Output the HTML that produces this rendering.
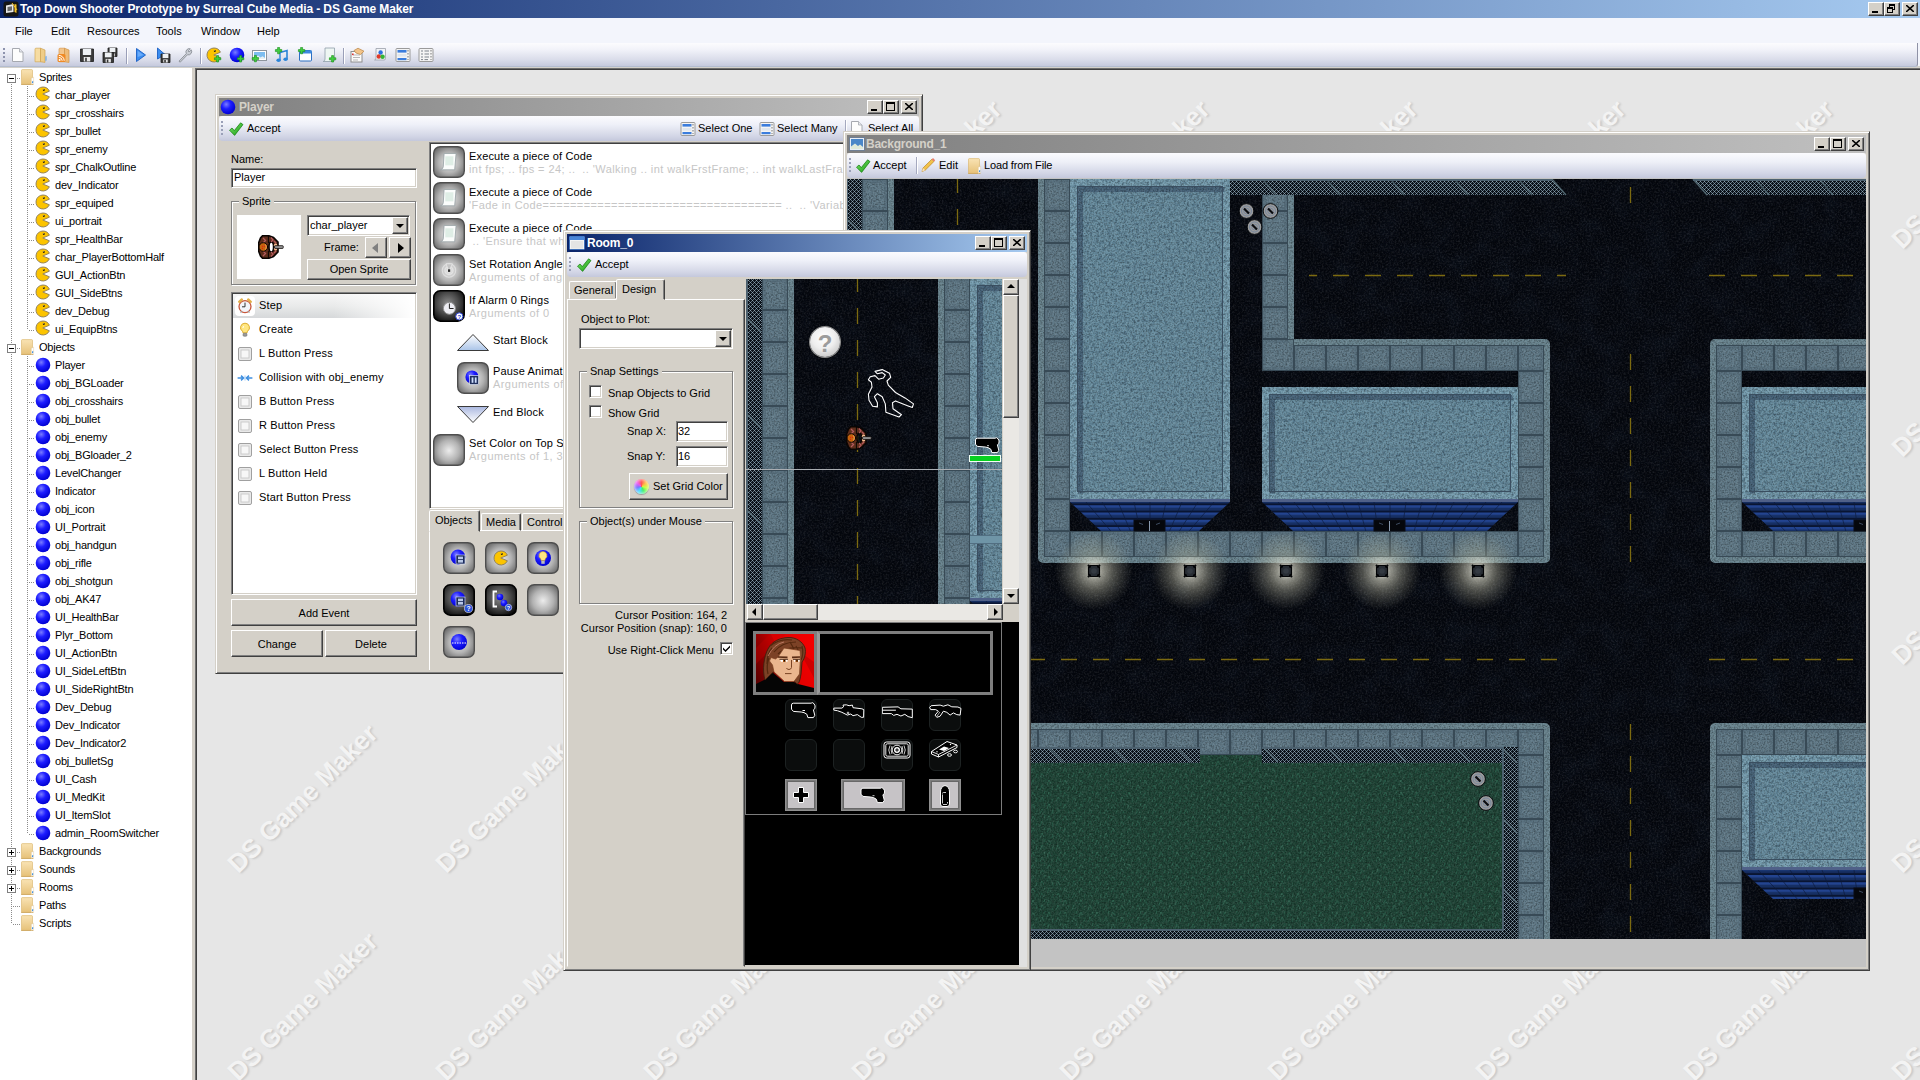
<!DOCTYPE html>
<html><head><meta charset="utf-8"><title>DS Game Maker</title>
<style>
*{box-sizing:border-box}
html,body{margin:0;padding:0}
body{width:1920px;height:1080px;overflow:hidden;position:relative;background:#e6e6e6;font:11px "Liberation Sans",sans-serif;color:#000;-webkit-font-smoothing:antialiased}
.a{position:absolute}
.t{position:absolute;white-space:nowrap;line-height:13px;height:13px}
svg{position:absolute;overflow:hidden}
.win{position:absolute;background:#d4d0c8;border:1px solid;border-color:#d4d0c8 #404040 #404040 #d4d0c8;box-shadow:inset 1px 1px #fff,inset -1px -1px #808080}
.cap{position:absolute;left:3px;right:3px;top:3px;height:18px;color:#fff;font:bold 12px "Liberation Sans",sans-serif}
.cap.on{background:linear-gradient(90deg,#0a246a,#a6caf0)}
.cap.off{background:linear-gradient(90deg,#808080,#c0c0c0);color:#d4d0c8}
.cap .t{top:2px;line-height:14px;height:14px}
.cb{position:absolute;top:2px;width:16px;height:14px;background:#d4d0c8;border:1px solid;border-color:#fff #404040 #404040 #fff;box-shadow:inset -1px -1px #808080}
.tb{position:absolute;height:25px;background:linear-gradient(#fbfbfe 0%,#eef0f8 35%,#d3d6e6 80%,#c4c8dc 100%);border-radius:3px 3px 4px 4px}
.grip{position:absolute;left:2px;top:5px;width:2px;height:15px;background:repeating-linear-gradient(#9aa0b8 0 2px,transparent 2px 4px)}
.btn{position:absolute;background:#d4d0c8;border:1px solid;border-color:#fff #404040 #404040 #fff;box-shadow:inset -1px -1px #808080;text-align:center}
.sunk{position:absolute;background:#fff;border:1px solid;border-color:#808080 #fff #fff #808080;box-shadow:inset 1px 1px #404040,inset -1px -1px #d4d0c8}
.grp{position:absolute;border:1px solid #808080;box-shadow:inset 1px 1px #fff,1px 1px #fff}
.grp>span{position:absolute;left:7px;top:-7px;background:#d4d0c8;padding:0 3px;line-height:13px}
.chk{position:absolute;width:13px;height:13px;background:#fff;border:1px solid;border-color:#808080 #fff #fff #808080;box-shadow:inset 1px 1px #404040,inset -1px -1px #d4d0c8}
.tri{position:absolute;width:0;height:0;border:4px solid transparent}
.tr{position:absolute;left:0;width:191px;height:18px}
.tr .t{top:3px}
.tt{letter-spacing:-.2px}
.sub{color:#c6c6c6;letter-spacing:.42px !important}
.wm{position:absolute;width:300px;height:32px;line-height:32px;text-align:center;white-space:nowrap;font:bold 26px "Liberation Sans",sans-serif;color:#f3f3f3;text-shadow:1px 2px 2px #c9c9c9;transform:rotate(-44.6deg)}
.act{font-size:11px;letter-spacing:.15px}
</style></head><body>

<svg width="0" height="0" style="position:absolute"><defs>
<radialGradient id="gBall" cx="38%" cy="32%" r="70%"><stop offset="0" stop-color="#7a7cff"/><stop offset=".45" stop-color="#1d1dff"/><stop offset="1" stop-color="#0000d0"/></radialGradient>
<linearGradient id="gFold" x1="0" y1="0" x2="0" y2="1"><stop offset="0" stop-color="#f9e3b4"/><stop offset="1" stop-color="#e6c178"/></linearGradient>
<linearGradient id="gChk" x1="0" y1="0" x2="1" y2="1"><stop offset="0" stop-color="#7de66a"/><stop offset="1" stop-color="#169a12"/></linearGradient>
<radialGradient id="gAct" cx="50%" cy="52%" r="62%"><stop offset="0" stop-color="#ececec"/><stop offset=".55" stop-color="#b2b2b2"/><stop offset="1" stop-color="#686868"/></radialGradient>
<radialGradient id="gActD" cx="46%" cy="42%" r="66%"><stop offset="0" stop-color="#8c8c8c"/><stop offset=".55" stop-color="#484848"/><stop offset="1" stop-color="#080808"/></radialGradient>
<linearGradient id="gTriU" x1="0" y1="0" x2="0" y2="1"><stop offset="0" stop-color="#fff"/><stop offset="1" stop-color="#aac4e8"/></linearGradient>
<linearGradient id="gTriD" x1="0" y1="0" x2="0" y2="1"><stop offset="0" stop-color="#aab8e0"/><stop offset="1" stop-color="#fff"/></linearGradient>
<symbol id="pac" viewBox="0 0 16 16"><path d="M8 1A7 7 0 1 0 14.400 10.800L7.800 8 14.400 5.200A7 7 0 0 0 8 1Z" fill="#fcc400" stroke="#8a7a5a" stroke-width=".9"/><circle cx="8.800" cy="4" r="1" fill="#2a2000"/><circle cx="8.500" cy="3.700" r=".4" fill="#fff"/></symbol>
<symbol id="ball" viewBox="0 0 16 16"><circle cx="8" cy="8" r="7.3" fill="url(#gBall)"/></symbol>
<symbol id="fold" viewBox="0 0 16 16"><path d="M1.5 1.5Q1.5 .6 2.4 .6H11.6Q12.5 .6 12.5 1.5V15.4H1.5Z" fill="url(#gFold)" stroke="#d9b166" stroke-width=".6"/><path d="M1.2 15.6H13.5" stroke="#c9a45c" stroke-width=".8"/><path d="M11.3 9.3 13.6 8.2V14.5L11.3 15.4Z" fill="#fff" stroke="#d8c090" stroke-width=".4"/><path d="M12 12.5 13.2 12V13.8L12 14.3Z" fill="#3f8fe0"/></symbol>
<symbol id="chk" viewBox="0 0 16 16"><path d="M1.5 9.2 4 7 6.3 9.6 12.6 1.8 15 3.6 6.6 14.4Z" fill="url(#gChk)" stroke="#0e7a0c" stroke-width=".7"/></symbol>
<symbol id="evt" viewBox="0 0 16 16"><rect x="1.5" y="1.5" width="13" height="13" rx="1.5" fill="#e9e9e9" stroke="#a0a0a0"/><rect x="4" y="4" width="8" height="8" fill="#f7f7f7" stroke="#c4c4c4" stroke-width=".8"/></symbol>
<symbol id="plus" viewBox="0 0 8 8"><path d="M3 .5H5V3H7.5V5H5V7.5H3V5H.5V3H3Z" fill="#2fc12f" stroke="#0b7a0b" stroke-width=".7"/></symbol>
<symbol id="abtn" viewBox="0 0 32 32"><rect x=".7" y=".7" width="30.600" height="30.600" rx="6.500" fill="url(#gAct)" stroke="#4e4e4e" stroke-width="1.400"/></symbol>
<symbol id="abtnd" viewBox="0 0 32 32"><rect x=".8" y=".8" width="30.400" height="30.400" rx="6.500" fill="url(#gActD)" stroke="#000" stroke-width="1.600"/></symbol>
<symbol id="scroll" viewBox="0 0 16 16"><path d="M4.300 1.200H14.400L13.200 15H1.300Q3.500 14.300 3.600 12.400Z" fill="#fbfdfc" stroke="#98a2a6" stroke-width=".7"/><rect x="5.300" y="3.600" width="6.800" height="7.600" fill="#d9ebe2" opacity=".85"/></symbol>
<symbol id="qm" viewBox="0 0 8 8"><circle cx="4" cy="4" r="3.6" fill="#2a50d8" stroke="#fff" stroke-width=".5"/><text x="4" y="6.2" font-size="6" font-weight="bold" fill="#fff" text-anchor="middle" font-family="Liberation Sans, sans-serif">?</text></symbol>
<symbol id="film" viewBox="0 0 10 10"><rect x=".5" y=".5" width="9" height="9" fill="#1a2a5a"/><rect x="2.5" y="1.5" width="5" height="3" fill="#bcd"/><rect x="2.5" y="5.5" width="5" height="3" fill="#bcd"/><path d="M1.5 1V9M8.5 1V9" stroke="#fff" stroke-width=".8" stroke-dasharray="1 1"/></symbol>
<symbol id="lst" viewBox="0 0 16 16"><rect x="1" y="1.5" width="14" height="13" rx="1" fill="#f4f4f4" stroke="#9a9a9a"/><rect x="2.5" y="3" width="9" height="2.6" fill="#3b7ddd"/><rect x="2.5" y="7" width="9" height="2.6" fill="#dfe6ee"/><rect x="2.5" y="11" width="9" height="2.2" fill="#3b7ddd"/><path d="M13 3V13" stroke="#777" stroke-dasharray="1.5 1.5"/></symbol>
<symbol id="plyr" viewBox="0 0 26 24"><path d="M4.500 .8H11L15.500 2.500 20 7V17L15.500 21.500 11 23.200H4.500L2.500 21 .6 16V8L2.500 3ZM13.200 7C11.800 7 11 9 11 12S11.800 17 13.200 17 15.600 15 15.600 12 14.600 7 13.200 7Z" fill="#5e2e1c" stroke="#0a0503" stroke-width="1.600" fill-rule="evenodd"/><path d="M5 3l2.500 2.500L5 8M13 2.500l2 2.500-2 2M16 6l2 2M5 16l2.500 2.500L5 21M13 17l2 2-2 2.500M16 18l2-2" fill="none" stroke="#b25a5c" stroke-width="1.300"/><path d="M10.400 1V8M10.400 16V23" stroke="#0a0503" stroke-width="1"/><circle cx="5.300" cy="12" r="4.300" fill="#c4640e" stroke="#0a0503" stroke-width="1"/><path d="M7.600 9.500Q9 12 7.600 14.500" fill="none" stroke="#f0a860" stroke-width=".9"/><rect x="3.900" y="10.800" width="1" height="1" fill="#e81010"/><rect x="5.900" y="10.800" width="1" height="1" fill="#e81010"/><rect x="3.900" y="12.900" width="1" height="1" fill="#e81010"/><circle cx="17.600" cy="10.300" r="1.700" fill="#f6bd90"/><circle cx="17.600" cy="13.800" r="1.700" fill="#f6bd90"/><rect x="16.600" y="10.700" width="8.600" height="2.700" rx=".6" fill="#9c9c9c" stroke="#0a0503" stroke-width=".8"/></symbol>
</defs></svg>

<div class="a" style="left:0;top:0;width:1920px;height:18px;background:linear-gradient(90deg,#0a246a,#a6caf0)"></div>
<svg class="a" style="left:3px;top:1px" width="16" height="16" viewBox="0 0 16 16"><rect x=".5" y=".5" width="15" height="15" rx="2.5" fill="#151515"/><path d="M3 4.5 10.5 3V11L3 12Z" fill="#e8e8e8"/><path d="M4.5 6 9 5.2V9.5L4.5 10.2Z" fill="#6a6a6a"/><path d="M11.5 3 13.5 3.5V12L11.5 11Z" fill="#f3c22a"/><path d="M9 2 14 9" stroke="#f3c22a" stroke-width="1"/></svg>
<div class="t" style="left:20px;top:2px;color:#fff;font:bold 12px 'Liberation Sans',sans-serif;line-height:14px;letter-spacing:-.1px">Top Down Shooter Prototype by Surreal Cube Media - DS Game Maker</div>
<div class="a" style="left:0;top:0;width:1920px;height:18px"><div class="cb" style="right:36px"><div class="a" style="left:3px;top:8px;width:6px;height:2px;background:#000"></div></div><div class="cb" style="right:20px"><div class="a" style="left:4px;top:1px;width:6px;height:6px;border:1px solid #000;border-top-width:2px"></div><div class="a" style="left:2px;top:4px;width:6px;height:6px;border:1px solid #000;border-top-width:2px;background:#d4d0c8"></div></div><div class="cb" style="right:2px"><svg class="a" style="left:3px;top:2px" width="8" height="7"><path d="M0 0 8 7M8 0 0 7" stroke="#000" stroke-width="1.6"/></svg></div></div>
<div class="a" style="left:0;top:18px;width:1920px;height:50px;background:#f3f5fc"></div>
<div class="t" style="left:15px;top:25px">File</div>
<div class="t" style="left:51px;top:25px">Edit</div>
<div class="t" style="left:87px;top:25px">Resources</div>
<div class="t" style="left:156px;top:25px">Tools</div>
<div class="t" style="left:201px;top:25px">Window</div>
<div class="t" style="left:257px;top:25px">Help</div>
<div class="a" style="left:0;top:66px;width:1920px;height:2px;background:#d3d1cb"></div><div class="a" style="left:0;top:43px;width:1918px;height:24px;background:linear-gradient(#fcfcfe 0%,#f1f2f9 30%,#d8dbe9 75%,#c6cadd 100%);border-radius:0 0 3px 0;border-bottom:1px solid #b3bccf;border-right:1px solid #8f92a6"></div>
<div class="a" style="left:3px;top:48px;width:2px;height:15px;background:repeating-linear-gradient(#8d93ad 0 2px,transparent 2px 4px)"></div>
<div class="a" style="left:126px;top:48px;width:1px;height:16px;background:#9a9fb8;box-shadow:1px 0 #fff"></div>
<div class="a" style="left:200px;top:48px;width:1px;height:16px;background:#9a9fb8;box-shadow:1px 0 #fff"></div>
<div class="a" style="left:343px;top:48px;width:1px;height:16px;background:#9a9fb8;box-shadow:1px 0 #fff"></div>
<svg class="a" style="left:10px;top:47px" width="16" height="16" viewBox="0 0 16 16"><path d="M2.5 1.5H9.5L13 5V14.5H2.5Z" fill="#fdfdfd" stroke="#a6a9b0"/><path d="M9.5 1.5V5H13" fill="#e6e8ee" stroke="#a6a9b0" stroke-width=".8"/></svg><svg class="a" style="left:33px;top:47px" width="16" height="16" viewBox="0 0 16 16"><path d="M2 2.2Q2 1.2 3 1.2H7.5V14.8H2Z" fill="#f6dca2" stroke="#d3a958" stroke-width=".7"/><path d="M7.5 1.2 12 3V15.4L7.5 14.8Z" fill="#efcd88" stroke="#cfa250" stroke-width=".7"/><path d="M12.4 9.5 13.6 9V13.4L12.4 14Z" fill="#6aa9e6"/></svg><svg class="a" style="left:56px;top:47px" width="16" height="16" viewBox="0 0 16 16"><path d="M3 2.2Q3 1.2 4 1.2H8.5V14.8H3Z" fill="#f3c58b" stroke="#d99a4e" stroke-width=".7"/><path d="M8.5 1.2 13 3V15.4L8.5 14.8Z" fill="#eebb78" stroke="#cf9448" stroke-width=".7"/><rect x="1.5" y="7" width="8" height="8" rx="1.6" fill="#f08a24"/><circle cx="3.6" cy="12.9" r="1" fill="#fff"/><path d="M2.8 10.4A3.4 3.4 0 0 1 6.2 13.8M2.8 8.4A5.4 5.4 0 0 1 8.2 13.8" fill="none" stroke="#fff" stroke-width="1"/></svg><svg class="a" style="left:79px;top:47px" width="16" height="16" viewBox="0 0 16 16"><path d="M1.5 2h13v12.5h-13z" fill="#3a3a3a" stroke="#1c1c1c" stroke-width=".8"/><rect x="3.84" y="2" width="8.32" height="6.0" fill="#eef1f4"/><rect x="4.75" y="10.0" width="6.5" height="4.5" fill="#e8e8e8"/><rect x="6.18" y="10.75" width="1.6" height="3.75" fill="#333"/></svg><svg class="a" style="left:102px;top:47px" width="16" height="16" viewBox="0 0 16 16"><path d="M6 1h9v8.5h-9z" fill="#3a3a3a" stroke="#1c1c1c" stroke-width=".8"/><rect x="7.62" y="1" width="5.76" height="4.08" fill="#eef1f4"/><rect x="8.25" y="6.44" width="4.5" height="3.06" fill="#e8e8e8"/><rect x="9.24" y="6.949999999999999" width="1.6" height="2.55" fill="#333"/><path d="M1 5.5h10.5v10h-10.5z" fill="#3a3a3a" stroke="#1c1c1c" stroke-width=".8"/><rect x="2.8899999999999997" y="5.5" width="6.72" height="4.8" fill="#eef1f4"/><rect x="3.625" y="11.9" width="5.25" height="3.5999999999999996" fill="#e8e8e8"/><rect x="4.779999999999999" y="12.5" width="1.6" height="3.0" fill="#333"/></svg><svg class="a" style="left:133px;top:47px" width="16" height="16" viewBox="0 0 16 16"><path d="M3.5 1.5 12.5 8 3.5 14.5Z" fill="#3a8df0" stroke="#1a5fc4" stroke-width=".9"/><path d="M4.6 3.8 10.6 8 4.6 10Z" fill="#7db8ff" opacity=".7"/></svg><svg class="a" style="left:155px;top:47px" width="16" height="16" viewBox="0 0 16 16"><path d="M2.5 1 10 7.5 2.5 12Z" fill="#3a8df0" stroke="#1a5fc4" stroke-width=".9"/><path d="M6 7h9v8.5h-9z" fill="#3a3a3a" stroke="#1c1c1c" stroke-width=".8"/><rect x="7.62" y="7" width="5.76" height="4.08" fill="#eef1f4"/><rect x="8.25" y="12.440000000000001" width="4.5" height="3.06" fill="#e8e8e8"/><rect x="9.24" y="12.95" width="1.6" height="2.55" fill="#333"/></svg><svg class="a" style="left:177px;top:47px" width="16" height="16" viewBox="0 0 16 16"><path d="M2 14.2 9.3 6.6A3.4 3.4 0 0 1 13.4 1.8L11.2 4 12 5 14.3 2.9A3.4 3.4 0 0 1 10.4 7.8L3.2 15.2Z" fill="#c9cdd4" stroke="#82868e" stroke-width=".8"/></svg><svg class="a" style="left:206px;top:47px" width="16" height="16" viewBox="0 0 16 16"><use href="#pac"/><path d="M10.6 8.6h2v2.200h2.200v2h-2.200v2.200h-2v-2.200h-2.200v-2h2.200z" fill="#3fd03f" stroke="#168a16" stroke-width=".6"/></svg><svg class="a" style="left:229px;top:47px" width="16" height="16" viewBox="0 0 16 16"><use href="#ball"/><path d="M10.6 8.6h2v2.200h2.200v2h-2.200v2.200h-2v-2.200h-2.200v-2h2.200z" fill="#3fd03f" stroke="#168a16" stroke-width=".6"/></svg><svg class="a" style="left:251px;top:47px" width="16" height="16" viewBox="0 0 16 16"><rect x="1.500" y="3.500" width="14" height="10" fill="#fff" stroke="#8e959e"/><rect x="3" y="5" width="11" height="7" fill="#7dbdf0"/><path d="M3 12 7 8.500 9.500 10.500 11.500 9.200 14 11V12Z" fill="#e8f0f4"/><path d="M3.4 8.4h2v2.200h2.200v2h-2.200v2.200h-2v-2.200h-2.200v-2h2.200z" fill="#3fd03f" stroke="#168a16" stroke-width=".6"/></svg><svg class="a" style="left:274px;top:47px" width="16" height="16" viewBox="0 0 16 16"><path d="M6 5.5 13 3.5V12" fill="none" stroke="#2a84d8" stroke-width="1.6"/><path d="M6 5.5V13" stroke="#2a84d8" stroke-width="1.4"/><ellipse cx="4.6" cy="13.2" rx="2.2" ry="1.7" fill="#2a84d8"/><ellipse cx="11.6" cy="12.2" rx="2.2" ry="1.7" fill="#2a84d8"/><path d="M3.6 0.4h2v2.200h2.200v2h-2.200v2.200h-2v-2.200h-2.200v-2h2.200z" fill="#3fd03f" stroke="#168a16" stroke-width=".6"/></svg><svg class="a" style="left:297px;top:47px" width="16" height="16" viewBox="0 0 16 16"><rect x="2.5" y="3.5" width="12" height="10.5" rx="1" fill="#fff" stroke="#2b6fc2"/><rect x="2.5" y="3.5" width="12" height="3" fill="#3f8ae0"/><path d="M3.6 0.4h2v2.200h2.200v2h-2.200v2.200h-2v-2.200h-2.200v-2h2.200z" fill="#3fd03f" stroke="#168a16" stroke-width=".6"/></svg><svg class="a" style="left:321px;top:47px" width="16" height="16" viewBox="0 0 16 16"><path d="M4 1H13.500V12.500Q13.500 14.500 11.500 14.500H2.200Q4.200 14 4 12Z" fill="#eef6f3" stroke="#8fa0aa" stroke-width=".8"/><path d="M10.6 8.6h2v2.200h2.200v2h-2.200v2.200h-2v-2.200h-2.200v-2h2.200z" fill="#3fd03f" stroke="#168a16" stroke-width=".6"/></svg><svg class="a" style="left:349px;top:47px" width="16" height="16" viewBox="0 0 16 16"><rect x="2" y="4.5" width="11" height="10.5" fill="#fbfbfb" stroke="#8e8e8e"/><path d="M4 8H11M4 10.5H11M4 13H9" stroke="#b8b8b8"/><path d="M5 3.5 9 1.2 15 4.2 11.5 7.5 7 6Z" fill="#f2c48a" stroke="#b98342" stroke-width=".7"/><rect x="3" y="6.5" width="1.6" height="1.6" fill="#d33"/></svg><svg class="a" style="left:372px;top:47px" width="16" height="16" viewBox="0 0 16 16"><path d="M4 1.5H13.5V11.5Q13.5 13 12 13H2.6Q4.2 12.4 4 11Z" fill="#f1f3f6" stroke="#9aa0aa" stroke-width=".8"/><circle cx="8.6" cy="5.5" r="2.2" fill="#2a6fe0"/><circle cx="6.8" cy="9.5" r="2.2" fill="#e03a2a"/><circle cx="10.6" cy="9.8" r="2.2" fill="#35b335"/></svg><svg class="a" style="left:395px;top:47px" width="16" height="16" viewBox="0 0 16 16"><use href="#lst"/></svg><svg class="a" style="left:418px;top:47px" width="16" height="16" viewBox="0 0 16 16"><rect x="1" y="1.5" width="14" height="13" rx="1" fill="#f4f4f4" stroke="#9a9a9a"/><path d="M3 4H5M6.5 4H11M3 7H5M6.5 7H11M3 10H5M6.5 10H11M3 12.6H5M6.5 12.6H10" stroke="#7d838c"/><path d="M13 3V13" stroke="#777" stroke-dasharray="1.5 1.5"/></svg>
<div class="a" style="left:0;top:68px;width:192px;height:1012px;background:#fff"></div>
<div class="a" style="left:11px;top:82px;width:1px;height:842px;background:repeating-linear-gradient(#8c8c8c 0 1px,transparent 1px 2px)"></div>
<div class="a" style="left:27px;top:86px;width:1px;height:244px;background:repeating-linear-gradient(#8c8c8c 0 1px,transparent 1px 2px)"></div>
<div class="a" style="left:27px;top:356px;width:1px;height:478px;background:repeating-linear-gradient(#8c8c8c 0 1px,transparent 1px 2px)"></div>
<div class="a" style="left:13px;top:78px;width:7px;height:1px;background:repeating-linear-gradient(90deg,#8c8c8c 0 1px,transparent 1px 2px)"></div>
<div class="a" style="left:7px;top:74px;width:9px;height:9px;border:1px solid #808080;background:#fff"><div class="a" style="left:1px;top:3px;width:5px;height:1px;background:#000"></div></div>
<svg class="a" style="left:20px;top:69px" width="16" height="16" ><use href="#fold"/></svg>
<div class="t tt" style="left:39px;top:71px">Sprites</div>
<div class="a" style="left:29px;top:96px;width:6px;height:1px;background:repeating-linear-gradient(90deg,#8c8c8c 0 1px,transparent 1px 2px)"></div>
<svg class="a" style="left:35px;top:86.4px" width="16" height="16" ><use href="#pac"/></svg>
<div class="t tt" style="left:55px;top:89px">char_player</div>
<div class="a" style="left:29px;top:114px;width:6px;height:1px;background:repeating-linear-gradient(90deg,#8c8c8c 0 1px,transparent 1px 2px)"></div>
<svg class="a" style="left:35px;top:104.4px" width="16" height="16" ><use href="#pac"/></svg>
<div class="t tt" style="left:55px;top:107px">spr_crosshairs</div>
<div class="a" style="left:29px;top:132px;width:6px;height:1px;background:repeating-linear-gradient(90deg,#8c8c8c 0 1px,transparent 1px 2px)"></div>
<svg class="a" style="left:35px;top:122.4px" width="16" height="16" ><use href="#pac"/></svg>
<div class="t tt" style="left:55px;top:125px">spr_bullet</div>
<div class="a" style="left:29px;top:150px;width:6px;height:1px;background:repeating-linear-gradient(90deg,#8c8c8c 0 1px,transparent 1px 2px)"></div>
<svg class="a" style="left:35px;top:140.4px" width="16" height="16" ><use href="#pac"/></svg>
<div class="t tt" style="left:55px;top:143px">spr_enemy</div>
<div class="a" style="left:29px;top:168px;width:6px;height:1px;background:repeating-linear-gradient(90deg,#8c8c8c 0 1px,transparent 1px 2px)"></div>
<svg class="a" style="left:35px;top:158.4px" width="16" height="16" ><use href="#pac"/></svg>
<div class="t tt" style="left:55px;top:161px">spr_ChalkOutline</div>
<div class="a" style="left:29px;top:186px;width:6px;height:1px;background:repeating-linear-gradient(90deg,#8c8c8c 0 1px,transparent 1px 2px)"></div>
<svg class="a" style="left:35px;top:176.4px" width="16" height="16" ><use href="#pac"/></svg>
<div class="t tt" style="left:55px;top:179px">dev_Indicator</div>
<div class="a" style="left:29px;top:204px;width:6px;height:1px;background:repeating-linear-gradient(90deg,#8c8c8c 0 1px,transparent 1px 2px)"></div>
<svg class="a" style="left:35px;top:194.4px" width="16" height="16" ><use href="#pac"/></svg>
<div class="t tt" style="left:55px;top:197px">spr_equiped</div>
<div class="a" style="left:29px;top:222px;width:6px;height:1px;background:repeating-linear-gradient(90deg,#8c8c8c 0 1px,transparent 1px 2px)"></div>
<svg class="a" style="left:35px;top:212.4px" width="16" height="16" ><use href="#pac"/></svg>
<div class="t tt" style="left:55px;top:215px">ui_portrait</div>
<div class="a" style="left:29px;top:240px;width:6px;height:1px;background:repeating-linear-gradient(90deg,#8c8c8c 0 1px,transparent 1px 2px)"></div>
<svg class="a" style="left:35px;top:230.4px" width="16" height="16" ><use href="#pac"/></svg>
<div class="t tt" style="left:55px;top:233px">spr_HealthBar</div>
<div class="a" style="left:29px;top:258px;width:6px;height:1px;background:repeating-linear-gradient(90deg,#8c8c8c 0 1px,transparent 1px 2px)"></div>
<svg class="a" style="left:35px;top:248.4px" width="16" height="16" ><use href="#pac"/></svg>
<div class="t tt" style="left:55px;top:251px">char_PlayerBottomHalf</div>
<div class="a" style="left:29px;top:276px;width:6px;height:1px;background:repeating-linear-gradient(90deg,#8c8c8c 0 1px,transparent 1px 2px)"></div>
<svg class="a" style="left:35px;top:266.4px" width="16" height="16" ><use href="#pac"/></svg>
<div class="t tt" style="left:55px;top:269px">GUI_ActionBtn</div>
<div class="a" style="left:29px;top:294px;width:6px;height:1px;background:repeating-linear-gradient(90deg,#8c8c8c 0 1px,transparent 1px 2px)"></div>
<svg class="a" style="left:35px;top:284.4px" width="16" height="16" ><use href="#pac"/></svg>
<div class="t tt" style="left:55px;top:287px">GUI_SideBtns</div>
<div class="a" style="left:29px;top:312px;width:6px;height:1px;background:repeating-linear-gradient(90deg,#8c8c8c 0 1px,transparent 1px 2px)"></div>
<svg class="a" style="left:35px;top:302.4px" width="16" height="16" ><use href="#pac"/></svg>
<div class="t tt" style="left:55px;top:305px">dev_Debug</div>
<div class="a" style="left:29px;top:330px;width:6px;height:1px;background:repeating-linear-gradient(90deg,#8c8c8c 0 1px,transparent 1px 2px)"></div>
<svg class="a" style="left:35px;top:320.4px" width="16" height="16" ><use href="#pac"/></svg>
<div class="t tt" style="left:55px;top:323px">ui_EquipBtns</div>
<div class="a" style="left:13px;top:348px;width:7px;height:1px;background:repeating-linear-gradient(90deg,#8c8c8c 0 1px,transparent 1px 2px)"></div>
<div class="a" style="left:7px;top:344px;width:9px;height:9px;border:1px solid #808080;background:#fff"><div class="a" style="left:1px;top:3px;width:5px;height:1px;background:#000"></div></div>
<svg class="a" style="left:20px;top:339px" width="16" height="16" ><use href="#fold"/></svg>
<div class="t tt" style="left:39px;top:341px">Objects</div>
<div class="a" style="left:29px;top:366px;width:6px;height:1px;background:repeating-linear-gradient(90deg,#8c8c8c 0 1px,transparent 1px 2px)"></div>
<svg class="a" style="left:35px;top:357px" width="16" height="16" ><use href="#ball"/></svg>
<div class="t tt" style="left:55px;top:359px">Player</div>
<div class="a" style="left:29px;top:384px;width:6px;height:1px;background:repeating-linear-gradient(90deg,#8c8c8c 0 1px,transparent 1px 2px)"></div>
<svg class="a" style="left:35px;top:375px" width="16" height="16" ><use href="#ball"/></svg>
<div class="t tt" style="left:55px;top:377px">obj_BGLoader</div>
<div class="a" style="left:29px;top:402px;width:6px;height:1px;background:repeating-linear-gradient(90deg,#8c8c8c 0 1px,transparent 1px 2px)"></div>
<svg class="a" style="left:35px;top:393px" width="16" height="16" ><use href="#ball"/></svg>
<div class="t tt" style="left:55px;top:395px">obj_crosshairs</div>
<div class="a" style="left:29px;top:420px;width:6px;height:1px;background:repeating-linear-gradient(90deg,#8c8c8c 0 1px,transparent 1px 2px)"></div>
<svg class="a" style="left:35px;top:411px" width="16" height="16" ><use href="#ball"/></svg>
<div class="t tt" style="left:55px;top:413px">obj_bullet</div>
<div class="a" style="left:29px;top:438px;width:6px;height:1px;background:repeating-linear-gradient(90deg,#8c8c8c 0 1px,transparent 1px 2px)"></div>
<svg class="a" style="left:35px;top:429px" width="16" height="16" ><use href="#ball"/></svg>
<div class="t tt" style="left:55px;top:431px">obj_enemy</div>
<div class="a" style="left:29px;top:456px;width:6px;height:1px;background:repeating-linear-gradient(90deg,#8c8c8c 0 1px,transparent 1px 2px)"></div>
<svg class="a" style="left:35px;top:447px" width="16" height="16" ><use href="#ball"/></svg>
<div class="t tt" style="left:55px;top:449px">obj_BGloader_2</div>
<div class="a" style="left:29px;top:474px;width:6px;height:1px;background:repeating-linear-gradient(90deg,#8c8c8c 0 1px,transparent 1px 2px)"></div>
<svg class="a" style="left:35px;top:465px" width="16" height="16" ><use href="#ball"/></svg>
<div class="t tt" style="left:55px;top:467px">LevelChanger</div>
<div class="a" style="left:29px;top:492px;width:6px;height:1px;background:repeating-linear-gradient(90deg,#8c8c8c 0 1px,transparent 1px 2px)"></div>
<svg class="a" style="left:35px;top:483px" width="16" height="16" ><use href="#ball"/></svg>
<div class="t tt" style="left:55px;top:485px">Indicator</div>
<div class="a" style="left:29px;top:510px;width:6px;height:1px;background:repeating-linear-gradient(90deg,#8c8c8c 0 1px,transparent 1px 2px)"></div>
<svg class="a" style="left:35px;top:501px" width="16" height="16" ><use href="#ball"/></svg>
<div class="t tt" style="left:55px;top:503px">obj_icon</div>
<div class="a" style="left:29px;top:528px;width:6px;height:1px;background:repeating-linear-gradient(90deg,#8c8c8c 0 1px,transparent 1px 2px)"></div>
<svg class="a" style="left:35px;top:519px" width="16" height="16" ><use href="#ball"/></svg>
<div class="t tt" style="left:55px;top:521px">UI_Portrait</div>
<div class="a" style="left:29px;top:546px;width:6px;height:1px;background:repeating-linear-gradient(90deg,#8c8c8c 0 1px,transparent 1px 2px)"></div>
<svg class="a" style="left:35px;top:537px" width="16" height="16" ><use href="#ball"/></svg>
<div class="t tt" style="left:55px;top:539px">obj_handgun</div>
<div class="a" style="left:29px;top:564px;width:6px;height:1px;background:repeating-linear-gradient(90deg,#8c8c8c 0 1px,transparent 1px 2px)"></div>
<svg class="a" style="left:35px;top:555px" width="16" height="16" ><use href="#ball"/></svg>
<div class="t tt" style="left:55px;top:557px">obj_rifle</div>
<div class="a" style="left:29px;top:582px;width:6px;height:1px;background:repeating-linear-gradient(90deg,#8c8c8c 0 1px,transparent 1px 2px)"></div>
<svg class="a" style="left:35px;top:573px" width="16" height="16" ><use href="#ball"/></svg>
<div class="t tt" style="left:55px;top:575px">obj_shotgun</div>
<div class="a" style="left:29px;top:600px;width:6px;height:1px;background:repeating-linear-gradient(90deg,#8c8c8c 0 1px,transparent 1px 2px)"></div>
<svg class="a" style="left:35px;top:591px" width="16" height="16" ><use href="#ball"/></svg>
<div class="t tt" style="left:55px;top:593px">obj_AK47</div>
<div class="a" style="left:29px;top:618px;width:6px;height:1px;background:repeating-linear-gradient(90deg,#8c8c8c 0 1px,transparent 1px 2px)"></div>
<svg class="a" style="left:35px;top:609px" width="16" height="16" ><use href="#ball"/></svg>
<div class="t tt" style="left:55px;top:611px">UI_HealthBar</div>
<div class="a" style="left:29px;top:636px;width:6px;height:1px;background:repeating-linear-gradient(90deg,#8c8c8c 0 1px,transparent 1px 2px)"></div>
<svg class="a" style="left:35px;top:627px" width="16" height="16" ><use href="#ball"/></svg>
<div class="t tt" style="left:55px;top:629px">Plyr_Bottom</div>
<div class="a" style="left:29px;top:654px;width:6px;height:1px;background:repeating-linear-gradient(90deg,#8c8c8c 0 1px,transparent 1px 2px)"></div>
<svg class="a" style="left:35px;top:645px" width="16" height="16" ><use href="#ball"/></svg>
<div class="t tt" style="left:55px;top:647px">UI_ActionBtn</div>
<div class="a" style="left:29px;top:672px;width:6px;height:1px;background:repeating-linear-gradient(90deg,#8c8c8c 0 1px,transparent 1px 2px)"></div>
<svg class="a" style="left:35px;top:663px" width="16" height="16" ><use href="#ball"/></svg>
<div class="t tt" style="left:55px;top:665px">UI_SideLeftBtn</div>
<div class="a" style="left:29px;top:690px;width:6px;height:1px;background:repeating-linear-gradient(90deg,#8c8c8c 0 1px,transparent 1px 2px)"></div>
<svg class="a" style="left:35px;top:681px" width="16" height="16" ><use href="#ball"/></svg>
<div class="t tt" style="left:55px;top:683px">UI_SideRightBtn</div>
<div class="a" style="left:29px;top:708px;width:6px;height:1px;background:repeating-linear-gradient(90deg,#8c8c8c 0 1px,transparent 1px 2px)"></div>
<svg class="a" style="left:35px;top:699px" width="16" height="16" ><use href="#ball"/></svg>
<div class="t tt" style="left:55px;top:701px">Dev_Debug</div>
<div class="a" style="left:29px;top:726px;width:6px;height:1px;background:repeating-linear-gradient(90deg,#8c8c8c 0 1px,transparent 1px 2px)"></div>
<svg class="a" style="left:35px;top:717px" width="16" height="16" ><use href="#ball"/></svg>
<div class="t tt" style="left:55px;top:719px">Dev_Indicator</div>
<div class="a" style="left:29px;top:744px;width:6px;height:1px;background:repeating-linear-gradient(90deg,#8c8c8c 0 1px,transparent 1px 2px)"></div>
<svg class="a" style="left:35px;top:735px" width="16" height="16" ><use href="#ball"/></svg>
<div class="t tt" style="left:55px;top:737px">Dev_Indicator2</div>
<div class="a" style="left:29px;top:762px;width:6px;height:1px;background:repeating-linear-gradient(90deg,#8c8c8c 0 1px,transparent 1px 2px)"></div>
<svg class="a" style="left:35px;top:753px" width="16" height="16" ><use href="#ball"/></svg>
<div class="t tt" style="left:55px;top:755px">obj_bulletSg</div>
<div class="a" style="left:29px;top:780px;width:6px;height:1px;background:repeating-linear-gradient(90deg,#8c8c8c 0 1px,transparent 1px 2px)"></div>
<svg class="a" style="left:35px;top:771px" width="16" height="16" ><use href="#ball"/></svg>
<div class="t tt" style="left:55px;top:773px">UI_Cash</div>
<div class="a" style="left:29px;top:798px;width:6px;height:1px;background:repeating-linear-gradient(90deg,#8c8c8c 0 1px,transparent 1px 2px)"></div>
<svg class="a" style="left:35px;top:789px" width="16" height="16" ><use href="#ball"/></svg>
<div class="t tt" style="left:55px;top:791px">UI_MedKit</div>
<div class="a" style="left:29px;top:816px;width:6px;height:1px;background:repeating-linear-gradient(90deg,#8c8c8c 0 1px,transparent 1px 2px)"></div>
<svg class="a" style="left:35px;top:807px" width="16" height="16" ><use href="#ball"/></svg>
<div class="t tt" style="left:55px;top:809px">UI_ItemSlot</div>
<div class="a" style="left:29px;top:834px;width:6px;height:1px;background:repeating-linear-gradient(90deg,#8c8c8c 0 1px,transparent 1px 2px)"></div>
<svg class="a" style="left:35px;top:825px" width="16" height="16" ><use href="#ball"/></svg>
<div class="t tt" style="left:55px;top:827px">admin_RoomSwitcher</div>
<div class="a" style="left:13px;top:852px;width:7px;height:1px;background:repeating-linear-gradient(90deg,#8c8c8c 0 1px,transparent 1px 2px)"></div>
<div class="a" style="left:7px;top:848px;width:9px;height:9px;border:1px solid #808080;background:#fff"><div class="a" style="left:1px;top:3px;width:5px;height:1px;background:#000"></div><div class="a" style="left:3px;top:1px;width:1px;height:5px;background:#000"></div></div>
<svg class="a" style="left:20px;top:843px" width="16" height="16" ><use href="#fold"/></svg>
<div class="t tt" style="left:39px;top:845px">Backgrounds</div>
<div class="a" style="left:13px;top:870px;width:7px;height:1px;background:repeating-linear-gradient(90deg,#8c8c8c 0 1px,transparent 1px 2px)"></div>
<div class="a" style="left:7px;top:866px;width:9px;height:9px;border:1px solid #808080;background:#fff"><div class="a" style="left:1px;top:3px;width:5px;height:1px;background:#000"></div><div class="a" style="left:3px;top:1px;width:1px;height:5px;background:#000"></div></div>
<svg class="a" style="left:20px;top:861px" width="16" height="16" ><use href="#fold"/></svg>
<div class="t tt" style="left:39px;top:863px">Sounds</div>
<div class="a" style="left:13px;top:888px;width:7px;height:1px;background:repeating-linear-gradient(90deg,#8c8c8c 0 1px,transparent 1px 2px)"></div>
<div class="a" style="left:7px;top:884px;width:9px;height:9px;border:1px solid #808080;background:#fff"><div class="a" style="left:1px;top:3px;width:5px;height:1px;background:#000"></div><div class="a" style="left:3px;top:1px;width:1px;height:5px;background:#000"></div></div>
<svg class="a" style="left:20px;top:879px" width="16" height="16" ><use href="#fold"/></svg>
<div class="t tt" style="left:39px;top:881px">Rooms</div>
<div class="a" style="left:13px;top:906px;width:7px;height:1px;background:repeating-linear-gradient(90deg,#8c8c8c 0 1px,transparent 1px 2px)"></div>
<svg class="a" style="left:20px;top:897px" width="16" height="16" ><use href="#fold"/></svg>
<div class="t tt" style="left:39px;top:899px">Paths</div>
<div class="a" style="left:13px;top:924px;width:7px;height:1px;background:repeating-linear-gradient(90deg,#8c8c8c 0 1px,transparent 1px 2px)"></div>
<svg class="a" style="left:20px;top:915px" width="16" height="16" ><use href="#fold"/></svg>
<div class="t tt" style="left:39px;top:917px">Scripts</div>
<div class="a" style="left:192px;top:68px;width:3px;height:1012px;background:#d4d0c8"></div>
<div class="a" style="left:195px;top:68px;width:1725px;height:1012px;border-left:1px solid #6e6e6e;border-top:1px solid #6e6e6e;box-shadow:inset 1px 1px #404040"></div>
<div class="a" style="left:197px;top:70px;width:1723px;height:1010px;overflow:hidden">
<div class="wm" style="left:-44px;top:-119px">DS Game Maker</div>
<div class="wm" style="left:164px;top:-119px">DS Game Maker</div>
<div class="wm" style="left:372px;top:-119px">DS Game Maker</div>
<div class="wm" style="left:580px;top:-119px">DS Game Maker</div>
<div class="wm" style="left:788px;top:-119px">DS Game Maker</div>
<div class="wm" style="left:996px;top:-119px">DS Game Maker</div>
<div class="wm" style="left:1204px;top:-119px">DS Game Maker</div>
<div class="wm" style="left:1412px;top:-119px">DS Game Maker</div>
<div class="wm" style="left:1620px;top:-119px">DS Game Maker</div>
<div class="wm" style="left:-44px;top:89px">DS Game Maker</div>
<div class="wm" style="left:164px;top:89px">DS Game Maker</div>
<div class="wm" style="left:372px;top:89px">DS Game Maker</div>
<div class="wm" style="left:580px;top:89px">DS Game Maker</div>
<div class="wm" style="left:788px;top:89px">DS Game Maker</div>
<div class="wm" style="left:996px;top:89px">DS Game Maker</div>
<div class="wm" style="left:1204px;top:89px">DS Game Maker</div>
<div class="wm" style="left:1412px;top:89px">DS Game Maker</div>
<div class="wm" style="left:1620px;top:89px">DS Game Maker</div>
<div class="wm" style="left:-44px;top:297px">DS Game Maker</div>
<div class="wm" style="left:164px;top:297px">DS Game Maker</div>
<div class="wm" style="left:372px;top:297px">DS Game Maker</div>
<div class="wm" style="left:580px;top:297px">DS Game Maker</div>
<div class="wm" style="left:788px;top:297px">DS Game Maker</div>
<div class="wm" style="left:996px;top:297px">DS Game Maker</div>
<div class="wm" style="left:1204px;top:297px">DS Game Maker</div>
<div class="wm" style="left:1412px;top:297px">DS Game Maker</div>
<div class="wm" style="left:1620px;top:297px">DS Game Maker</div>
<div class="wm" style="left:-44px;top:505px">DS Game Maker</div>
<div class="wm" style="left:164px;top:505px">DS Game Maker</div>
<div class="wm" style="left:372px;top:505px">DS Game Maker</div>
<div class="wm" style="left:580px;top:505px">DS Game Maker</div>
<div class="wm" style="left:788px;top:505px">DS Game Maker</div>
<div class="wm" style="left:996px;top:505px">DS Game Maker</div>
<div class="wm" style="left:1204px;top:505px">DS Game Maker</div>
<div class="wm" style="left:1412px;top:505px">DS Game Maker</div>
<div class="wm" style="left:1620px;top:505px">DS Game Maker</div>
<div class="wm" style="left:-44px;top:713px">DS Game Maker</div>
<div class="wm" style="left:164px;top:713px">DS Game Maker</div>
<div class="wm" style="left:372px;top:713px">DS Game Maker</div>
<div class="wm" style="left:580px;top:713px">DS Game Maker</div>
<div class="wm" style="left:788px;top:713px">DS Game Maker</div>
<div class="wm" style="left:996px;top:713px">DS Game Maker</div>
<div class="wm" style="left:1204px;top:713px">DS Game Maker</div>
<div class="wm" style="left:1412px;top:713px">DS Game Maker</div>
<div class="wm" style="left:1620px;top:713px">DS Game Maker</div>
<div class="wm" style="left:-44px;top:921px">DS Game Maker</div>
<div class="wm" style="left:164px;top:921px">DS Game Maker</div>
<div class="wm" style="left:372px;top:921px">DS Game Maker</div>
<div class="wm" style="left:580px;top:921px">DS Game Maker</div>
<div class="wm" style="left:788px;top:921px">DS Game Maker</div>
<div class="wm" style="left:996px;top:921px">DS Game Maker</div>
<div class="wm" style="left:1204px;top:921px">DS Game Maker</div>
<div class="wm" style="left:1412px;top:921px">DS Game Maker</div>
<div class="wm" style="left:1620px;top:921px">DS Game Maker</div>
</div>
<svg width="0" height="0" style="position:absolute"><defs>
<filter id="nzW" x="0" y="0" width="100%" height="100%" color-interpolation-filters="sRGB"><feTurbulence type="fractalNoise" baseFrequency=".55" numOctaves="2" seed="4"/><feColorMatrix type="matrix" values="0 0 0 0 1 0 0 0 0 1 0 0 0 0 1 2.6 0 0 0 -1.05"/></filter>
<filter id="nzB" x="0" y="0" width="100%" height="100%" color-interpolation-filters="sRGB"><feTurbulence type="fractalNoise" baseFrequency=".6" numOctaves="2" seed="9"/><feColorMatrix type="matrix" values="0 0 0 0 0 0 0 0 0 0 0 0 0 0 0 0 2.6 0 0 -1.05"/></filter>
<filter id="nzR" x="0" y="0" width="100%" height="100%" color-interpolation-filters="sRGB"><feTurbulence type="fractalNoise" baseFrequency=".32" numOctaves="1" seed="5"/><feColorMatrix type="matrix" values="0 0 0 0 .25 0 0 0 0 .37 0 0 0 0 .45 4 0 0 0 -1.9"/></filter>
<filter id="nzM" x="0" y="0" width="100%" height="100%" color-interpolation-filters="sRGB"><feTurbulence type="fractalNoise" baseFrequency=".045" numOctaves="2" seed="7"/><feColorMatrix type="matrix" values="0 0 0 0 .09 0 0 0 0 .13 0 0 0 0 .2 3 0 0 0 -1.2"/></filter>
<radialGradient id="gLight2"><stop offset="0" stop-color="#e8e4c0" stop-opacity=".9"/><stop offset=".5" stop-color="#c8c4a0" stop-opacity=".6"/><stop offset=".85" stop-color="#b0ac90" stop-opacity=".25"/><stop offset="1" stop-color="#a8a488" stop-opacity="0"/></radialGradient>
<radialGradient id="gLight"><stop offset="0" stop-color="#fffff4" stop-opacity=".92"/><stop offset=".22" stop-color="#ecebd8" stop-opacity=".6"/><stop offset=".5" stop-color="#d8d6bc" stop-opacity=".34"/><stop offset=".78" stop-color="#c8c6ac" stop-opacity=".14"/><stop offset="1" stop-color="#c0c0a8" stop-opacity="0"/></radialGradient>
<pattern id="pFen" width="4" height="4" patternUnits="userSpaceOnUse" shape-rendering="crispEdges"><rect width="4" height="4" fill="#0b1119"/><path d="M0 0h1v1h-1zM2 2h1v1h-1z" fill="#8a9eab"/><path d="M1 1h1v1h-1zM3 3h1v1h-1zM3 1h1v1h-1zM1 3h1v1h-1z" fill="#5c707d"/></pattern>
<pattern id="pAwn" width="8" height="7.25" patternUnits="userSpaceOnUse"><rect width="8" height="7.25" fill="#162f64"/><rect width="8" height="2.4" y="0" fill="#234490"/><rect width="8" height="2" y="5.25" fill="#091532"/></pattern>
<pattern id="pGrass" width="16" height="12" patternUnits="userSpaceOnUse"><path d="M2 11l2-5 2 4M9 6l2-5 2 4M6 3l1-3M14 11l1-4" stroke="#2f6a55" stroke-width=".9" fill="none" opacity=".7"/><path d="M0 6l2 3M8 12l2-4" stroke="#173628" stroke-width="1" fill="none" opacity=".7"/></pattern>
<symbol id="map" viewBox="0 0 1020 760"><rect width="1020" height="760" fill="#04070e"/><rect width="1020" height="760" filter="url(#nzM)" opacity=".2"/><rect x="16" y="0" width="32" height="32" fill="#69848f"/><rect x="16" y="0" width="26" height="32" fill="#607987"/><rect x="16" y="32" width="32" height="32" fill="#69848f"/><rect x="16" y="32" width="26" height="32" fill="#607987"/><rect x="16" y="64" width="32" height="32" fill="#69848f"/><rect x="16" y="64" width="26" height="32" fill="#607987"/><rect x="16" y="96" width="32" height="32" fill="#69848f"/><rect x="16" y="96" width="26" height="32" fill="#607987"/><rect x="16" y="128" width="32" height="32" fill="#69848f"/><rect x="16" y="128" width="26" height="32" fill="#607987"/><rect x="16" y="160" width="32" height="32" fill="#69848f"/><rect x="16" y="160" width="26" height="32" fill="#607987"/><rect x="16" y="192" width="32" height="32" fill="#69848f"/><rect x="16" y="192" width="26" height="32" fill="#607987"/><rect x="16" y="224" width="32" height="32" fill="#69848f"/><rect x="16" y="224" width="26" height="32" fill="#607987"/><rect x="16" y="256" width="32" height="32" fill="#69848f"/><rect x="16" y="256" width="26" height="32" fill="#607987"/><rect x="16" y="288" width="32" height="32" fill="#69848f"/><rect x="16" y="288" width="26" height="32" fill="#607987"/><rect x="16" y="320" width="32" height="32" fill="#69848f"/><rect x="16" y="320" width="26" height="32" fill="#607987"/><rect x="16" y="352" width="32" height="32" fill="#69848f"/><rect x="16" y="352" width="26" height="32" fill="#607987"/><rect x="16" y="384" width="32" height="32" fill="#69848f"/><rect x="16" y="384" width="26" height="32" fill="#607987"/><rect x="16" y="416" width="32" height="32" fill="#69848f"/><rect x="16" y="416" width="26" height="32" fill="#607987"/><rect x="16" y="448" width="32" height="32" fill="#69848f"/><rect x="16" y="448" width="26" height="32" fill="#607987"/><rect x="16" y="480" width="32" height="32" fill="#69848f"/><rect x="16" y="480" width="26" height="32" fill="#607987"/><rect x="16" y="512" width="32" height="32" fill="#69848f"/><rect x="16" y="512" width="26" height="32" fill="#607987"/><rect x="16" y="544" width="32" height="32" fill="#69848f"/><rect x="16" y="544" width="26" height="32" fill="#607987"/><rect x="16" y="576" width="32" height="32" fill="#69848f"/><rect x="16" y="576" width="26" height="32" fill="#607987"/><rect x="16" y="608" width="32" height="32" fill="#69848f"/><rect x="16" y="608" width="26" height="32" fill="#607987"/><rect x="16" y="640" width="32" height="32" fill="#69848f"/><rect x="16" y="640" width="26" height="32" fill="#607987"/><rect x="16" y="672" width="32" height="32" fill="#69848f"/><rect x="16" y="672" width="26" height="32" fill="#607987"/><rect x="16" y="704" width="32" height="32" fill="#69848f"/><rect x="16" y="704" width="26" height="32" fill="#607987"/><rect x="16" y="736" width="32" height="32" fill="#69848f"/><rect x="16" y="736" width="26" height="32" fill="#607987"/><rect x="192" y="0" width="32" height="32" fill="#69848f"/><rect x="198" y="0" width="26" height="32" fill="#607987"/><rect x="192" y="32" width="32" height="32" fill="#69848f"/><rect x="198" y="32" width="26" height="32" fill="#607987"/><rect x="192" y="64" width="32" height="32" fill="#69848f"/><rect x="198" y="64" width="26" height="32" fill="#607987"/><rect x="192" y="96" width="32" height="32" fill="#69848f"/><rect x="198" y="96" width="26" height="32" fill="#607987"/><rect x="192" y="128" width="32" height="32" fill="#69848f"/><rect x="198" y="128" width="26" height="32" fill="#607987"/><rect x="192" y="160" width="32" height="32" fill="#69848f"/><rect x="198" y="160" width="26" height="32" fill="#607987"/><rect x="192" y="192" width="32" height="32" fill="#69848f"/><rect x="198" y="192" width="26" height="32" fill="#607987"/><rect x="192" y="224" width="32" height="32" fill="#69848f"/><rect x="198" y="224" width="26" height="32" fill="#607987"/><rect x="192" y="256" width="32" height="32" fill="#69848f"/><rect x="198" y="256" width="26" height="32" fill="#607987"/><rect x="192" y="288" width="32" height="32" fill="#69848f"/><rect x="198" y="288" width="26" height="32" fill="#607987"/><rect x="192" y="320" width="32" height="32" fill="#69848f"/><rect x="198" y="320" width="26" height="32" fill="#607987"/><rect x="192" y="352" width="32" height="32" fill="#69848f"/><rect x="198" y="352" width="26" height="26" fill="#607987"/><rect x="224" y="352" width="32" height="32" fill="#69848f"/><rect x="224" y="352" width="32" height="26" fill="#607987"/><rect x="256" y="352" width="32" height="32" fill="#69848f"/><rect x="256" y="352" width="32" height="26" fill="#607987"/><rect x="288" y="352" width="32" height="32" fill="#69848f"/><rect x="288" y="352" width="32" height="26" fill="#607987"/><rect x="320" y="352" width="32" height="32" fill="#69848f"/><rect x="320" y="352" width="32" height="26" fill="#607987"/><rect x="352" y="352" width="32" height="32" fill="#69848f"/><rect x="352" y="352" width="32" height="26" fill="#607987"/><rect x="384" y="352" width="32" height="32" fill="#69848f"/><rect x="384" y="352" width="32" height="26" fill="#607987"/><rect x="416" y="352" width="32" height="32" fill="#69848f"/><rect x="416" y="352" width="32" height="26" fill="#607987"/><rect x="448" y="352" width="32" height="32" fill="#69848f"/><rect x="448" y="352" width="32" height="26" fill="#607987"/><rect x="480" y="352" width="32" height="32" fill="#69848f"/><rect x="480" y="352" width="32" height="26" fill="#607987"/><rect x="512" y="352" width="32" height="32" fill="#69848f"/><rect x="512" y="352" width="32" height="26" fill="#607987"/><rect x="544" y="352" width="32" height="32" fill="#69848f"/><rect x="544" y="352" width="32" height="26" fill="#607987"/><rect x="576" y="352" width="32" height="32" fill="#69848f"/><rect x="576" y="352" width="32" height="26" fill="#607987"/><rect x="608" y="352" width="32" height="32" fill="#69848f"/><rect x="608" y="352" width="32" height="26" fill="#607987"/><rect x="640" y="352" width="32" height="32" fill="#69848f"/><rect x="640" y="352" width="32" height="26" fill="#607987"/><rect x="672" y="352" width="32" height="32" fill="#69848f"/><rect x="672" y="352" width="26" height="26" fill="#607987"/><rect x="672" y="192" width="32" height="32" fill="#69848f"/><rect x="672" y="192" width="26" height="32" fill="#607987"/><rect x="672" y="224" width="32" height="32" fill="#69848f"/><rect x="672" y="224" width="26" height="32" fill="#607987"/><rect x="672" y="256" width="32" height="32" fill="#69848f"/><rect x="672" y="256" width="26" height="32" fill="#607987"/><rect x="672" y="288" width="32" height="32" fill="#69848f"/><rect x="672" y="288" width="26" height="32" fill="#607987"/><rect x="672" y="320" width="32" height="32" fill="#69848f"/><rect x="672" y="320" width="26" height="32" fill="#607987"/><rect x="672" y="160" width="32" height="32" fill="#69848f"/><rect x="672" y="166" width="26" height="26" fill="#607987"/><rect x="448" y="160" width="32" height="32" fill="#69848f"/><rect x="448" y="166" width="32" height="26" fill="#607987"/><rect x="480" y="160" width="32" height="32" fill="#69848f"/><rect x="480" y="166" width="32" height="26" fill="#607987"/><rect x="512" y="160" width="32" height="32" fill="#69848f"/><rect x="512" y="166" width="32" height="26" fill="#607987"/><rect x="544" y="160" width="32" height="32" fill="#69848f"/><rect x="544" y="166" width="32" height="26" fill="#607987"/><rect x="576" y="160" width="32" height="32" fill="#69848f"/><rect x="576" y="166" width="32" height="26" fill="#607987"/><rect x="608" y="160" width="32" height="32" fill="#69848f"/><rect x="608" y="166" width="32" height="26" fill="#607987"/><rect x="640" y="160" width="32" height="32" fill="#69848f"/><rect x="640" y="166" width="32" height="26" fill="#607987"/><rect x="416" y="0" width="32" height="32" fill="#69848f"/><rect x="416" y="0" width="26" height="32" fill="#607987"/><rect x="416" y="32" width="32" height="32" fill="#69848f"/><rect x="416" y="32" width="26" height="32" fill="#607987"/><rect x="416" y="64" width="32" height="32" fill="#69848f"/><rect x="416" y="64" width="26" height="32" fill="#607987"/><rect x="416" y="96" width="32" height="32" fill="#69848f"/><rect x="416" y="96" width="26" height="32" fill="#607987"/><rect x="416" y="128" width="32" height="32" fill="#69848f"/><rect x="416" y="128" width="26" height="32" fill="#607987"/><rect x="416" y="160" width="32" height="32" fill="#69848f"/><rect x="416" y="160" width="32" height="32" fill="#607987"/><rect x="442" y="160" width="6" height="6" fill="#69848f"/><rect x="864" y="160" width="32" height="32" fill="#69848f"/><rect x="870" y="166" width="26" height="26" fill="#607987"/><rect x="896" y="160" width="32" height="32" fill="#69848f"/><rect x="896" y="166" width="32" height="26" fill="#607987"/><rect x="928" y="160" width="32" height="32" fill="#69848f"/><rect x="928" y="166" width="32" height="26" fill="#607987"/><rect x="960" y="160" width="32" height="32" fill="#69848f"/><rect x="960" y="166" width="32" height="26" fill="#607987"/><rect x="992" y="160" width="32" height="32" fill="#69848f"/><rect x="992" y="166" width="32" height="26" fill="#607987"/><rect x="864" y="192" width="32" height="32" fill="#69848f"/><rect x="870" y="192" width="26" height="32" fill="#607987"/><rect x="864" y="224" width="32" height="32" fill="#69848f"/><rect x="870" y="224" width="26" height="32" fill="#607987"/><rect x="864" y="256" width="32" height="32" fill="#69848f"/><rect x="870" y="256" width="26" height="32" fill="#607987"/><rect x="864" y="288" width="32" height="32" fill="#69848f"/><rect x="870" y="288" width="26" height="32" fill="#607987"/><rect x="864" y="320" width="32" height="32" fill="#69848f"/><rect x="870" y="320" width="26" height="32" fill="#607987"/><rect x="864" y="352" width="32" height="32" fill="#69848f"/><rect x="870" y="352" width="26" height="26" fill="#607987"/><rect x="896" y="352" width="32" height="32" fill="#69848f"/><rect x="896" y="352" width="32" height="26" fill="#607987"/><rect x="928" y="352" width="32" height="32" fill="#69848f"/><rect x="928" y="352" width="32" height="26" fill="#607987"/><rect x="960" y="352" width="32" height="32" fill="#69848f"/><rect x="960" y="352" width="32" height="26" fill="#607987"/><rect x="992" y="352" width="32" height="32" fill="#69848f"/><rect x="992" y="352" width="32" height="26" fill="#607987"/><rect x="160" y="544" width="32" height="32" fill="#69848f"/><rect x="160" y="550" width="32" height="26" fill="#607987"/><rect x="192" y="544" width="32" height="32" fill="#69848f"/><rect x="192" y="550" width="32" height="26" fill="#607987"/><rect x="224" y="544" width="32" height="32" fill="#69848f"/><rect x="224" y="550" width="32" height="26" fill="#607987"/><rect x="256" y="544" width="32" height="32" fill="#69848f"/><rect x="256" y="550" width="32" height="26" fill="#607987"/><rect x="288" y="544" width="32" height="32" fill="#69848f"/><rect x="288" y="550" width="32" height="26" fill="#607987"/><rect x="320" y="544" width="32" height="32" fill="#69848f"/><rect x="320" y="550" width="32" height="26" fill="#607987"/><rect x="352" y="544" width="32" height="32" fill="#69848f"/><rect x="352" y="550" width="32" height="26" fill="#607987"/><rect x="384" y="544" width="32" height="32" fill="#69848f"/><rect x="384" y="550" width="32" height="26" fill="#607987"/><rect x="416" y="544" width="32" height="32" fill="#69848f"/><rect x="416" y="550" width="32" height="26" fill="#607987"/><rect x="448" y="544" width="32" height="32" fill="#69848f"/><rect x="448" y="550" width="32" height="26" fill="#607987"/><rect x="480" y="544" width="32" height="32" fill="#69848f"/><rect x="480" y="550" width="32" height="26" fill="#607987"/><rect x="512" y="544" width="32" height="32" fill="#69848f"/><rect x="512" y="550" width="32" height="26" fill="#607987"/><rect x="544" y="544" width="32" height="32" fill="#69848f"/><rect x="544" y="550" width="32" height="26" fill="#607987"/><rect x="576" y="544" width="32" height="32" fill="#69848f"/><rect x="576" y="550" width="32" height="26" fill="#607987"/><rect x="608" y="544" width="32" height="32" fill="#69848f"/><rect x="608" y="550" width="32" height="26" fill="#607987"/><rect x="640" y="544" width="32" height="32" fill="#69848f"/><rect x="640" y="550" width="32" height="26" fill="#607987"/><rect x="672" y="544" width="32" height="32" fill="#69848f"/><rect x="672" y="550" width="26" height="26" fill="#607987"/><rect x="672" y="576" width="32" height="32" fill="#69848f"/><rect x="672" y="576" width="26" height="32" fill="#607987"/><rect x="672" y="608" width="32" height="32" fill="#69848f"/><rect x="672" y="608" width="26" height="32" fill="#607987"/><rect x="672" y="640" width="32" height="32" fill="#69848f"/><rect x="672" y="640" width="26" height="32" fill="#607987"/><rect x="672" y="672" width="32" height="32" fill="#69848f"/><rect x="672" y="672" width="26" height="32" fill="#607987"/><rect x="672" y="704" width="32" height="32" fill="#69848f"/><rect x="672" y="704" width="26" height="32" fill="#607987"/><rect x="672" y="736" width="32" height="32" fill="#69848f"/><rect x="672" y="736" width="26" height="32" fill="#607987"/><rect x="864" y="544" width="32" height="32" fill="#69848f"/><rect x="870" y="550" width="26" height="26" fill="#607987"/><rect x="896" y="544" width="32" height="32" fill="#69848f"/><rect x="896" y="550" width="32" height="26" fill="#607987"/><rect x="928" y="544" width="32" height="32" fill="#69848f"/><rect x="928" y="550" width="32" height="26" fill="#607987"/><rect x="960" y="544" width="32" height="32" fill="#69848f"/><rect x="960" y="550" width="32" height="26" fill="#607987"/><rect x="992" y="544" width="32" height="32" fill="#69848f"/><rect x="992" y="550" width="32" height="26" fill="#607987"/><rect x="864" y="576" width="32" height="32" fill="#69848f"/><rect x="870" y="576" width="26" height="32" fill="#607987"/><rect x="864" y="608" width="32" height="32" fill="#69848f"/><rect x="870" y="608" width="26" height="32" fill="#607987"/><rect x="864" y="640" width="32" height="32" fill="#69848f"/><rect x="870" y="640" width="26" height="32" fill="#607987"/><rect x="864" y="672" width="32" height="32" fill="#69848f"/><rect x="870" y="672" width="26" height="32" fill="#607987"/><rect x="864" y="704" width="32" height="32" fill="#69848f"/><rect x="870" y="704" width="26" height="32" fill="#607987"/><rect x="864" y="736" width="32" height="32" fill="#69848f"/><rect x="870" y="736" width="26" height="32" fill="#607987"/><path d="M192 384v-5a5 5 0 0 0 5 5z" fill="#04070e"/><path d="M704 384h-5a5 5 0 0 0 5-5z" fill="#04070e"/><path d="M704 160v5a5 5 0 0 0-5-5z" fill="#04070e"/><path d="M864 160h5a5 5 0 0 0-5 5z" fill="#04070e"/><path d="M864 384v-5a5 5 0 0 0 5 5z" fill="#04070e"/><path d="M704 544v5a5 5 0 0 0-5-5z" fill="#04070e"/><path d="M864 544h5a5 5 0 0 0-5 5z" fill="#04070e"/><rect x="160" y="576" width="497" height="176" fill="#1e4335"/><rect x="160" y="576" width="497" height="176" fill="url(#pGrass)"/><rect x="224" y="0" width="160" height="320" fill="#789fb1"/><rect x="232" y="8" width="144" height="304" fill="#698ea0"/><path d="M232 312V8H376" fill="none" stroke="#48647a" stroke-width="5" transform="translate(2.500 2.500)"/><rect x="416" y="208" width="256" height="112" fill="#789fb1"/><rect x="424" y="216" width="240" height="96" fill="#698ea0"/><path d="M424 312V216H664" fill="none" stroke="#48647a" stroke-width="5" transform="translate(2.500 2.500)"/><rect x="896" y="208" width="160" height="112" fill="#789fb1"/><rect x="904" y="216" width="144" height="96" fill="#698ea0"/><path d="M904 312V216H1048" fill="none" stroke="#48647a" stroke-width="5" transform="translate(2.500 2.500)"/><rect x="896" y="576" width="160" height="112" fill="#789fb1"/><rect x="904" y="584" width="144" height="96" fill="#698ea0"/><path d="M904 680V584H1048" fill="none" stroke="#48647a" stroke-width="5" transform="translate(2.500 2.500)"/><rect x="224" y="0" width="160" height="320" filter="url(#nzR)" opacity=".5"/><rect x="416" y="208" width="256" height="112" filter="url(#nzR)" opacity=".5"/><rect x="896" y="208" width="124" height="112" filter="url(#nzR)" opacity=".5"/><rect x="896" y="576" width="124" height="112" filter="url(#nzR)" opacity=".5"/><rect width="1020" height="760" filter="url(#nzW)" opacity=".085"/><rect width="1020" height="760" filter="url(#nzB)" opacity=".30"/><path d="M111.5 0V760" stroke="#7c6a10" stroke-width="1.3" stroke-dasharray="16 16" stroke-dashoffset="2"/><path d="M463 96.5H720" stroke="#7c6a10" stroke-width="1.3" stroke-dasharray="16 16" stroke-dashoffset="8"/><path d="M863 96.5H1020" stroke="#7c6a10" stroke-width="1.3" stroke-dasharray="16 16" stroke-dashoffset="0"/><path d="M784.5 8V24" stroke="#7c6a10" stroke-width="1.3" stroke-dasharray="16 16" stroke-dashoffset="0"/><path d="M784.5 175V383" stroke="#7c6a10" stroke-width="1.3" stroke-dasharray="16 16" stroke-dashoffset="0"/><path d="M151 480.5H711" stroke="#7c6a10" stroke-width="1.3" stroke-dasharray="16 16" stroke-dashoffset="0"/><path d="M863 480.5H1010" stroke="#7c6a10" stroke-width="1.3" stroke-dasharray="16 16" stroke-dashoffset="0"/><path d="M784.5 545V760" stroke="#7c6a10" stroke-width="1.3" stroke-dasharray="16 16" stroke-dashoffset="0"/><g fill="none" stroke="#384a56"><rect x="16.5" y="0.5" width="25" height="31"/><rect x="16.5" y="32.5" width="25" height="31"/><rect x="16.5" y="64.5" width="25" height="31"/><rect x="16.5" y="96.5" width="25" height="31"/><rect x="16.5" y="128.5" width="25" height="31"/><rect x="16.5" y="160.5" width="25" height="31"/><rect x="16.5" y="192.5" width="25" height="31"/><rect x="16.5" y="224.5" width="25" height="31"/><rect x="16.5" y="256.5" width="25" height="31"/><rect x="16.5" y="288.5" width="25" height="31"/><rect x="16.5" y="320.5" width="25" height="31"/><rect x="16.5" y="352.5" width="25" height="31"/><rect x="16.5" y="384.5" width="25" height="31"/><rect x="16.5" y="416.5" width="25" height="31"/><rect x="16.5" y="448.5" width="25" height="31"/><rect x="16.5" y="480.5" width="25" height="31"/><rect x="16.5" y="512.5" width="25" height="31"/><rect x="16.5" y="544.5" width="25" height="31"/><rect x="16.5" y="576.5" width="25" height="31"/><rect x="16.5" y="608.5" width="25" height="31"/><rect x="16.5" y="640.5" width="25" height="31"/><rect x="16.5" y="672.5" width="25" height="31"/><rect x="16.5" y="704.5" width="25" height="31"/><rect x="16.5" y="736.5" width="25" height="31"/><rect x="198.5" y="0.5" width="25" height="31"/><rect x="198.5" y="32.5" width="25" height="31"/><rect x="198.5" y="64.5" width="25" height="31"/><rect x="198.5" y="96.5" width="25" height="31"/><rect x="198.5" y="128.5" width="25" height="31"/><rect x="198.5" y="160.5" width="25" height="31"/><rect x="198.5" y="192.5" width="25" height="31"/><rect x="198.5" y="224.5" width="25" height="31"/><rect x="198.5" y="256.5" width="25" height="31"/><rect x="198.5" y="288.5" width="25" height="31"/><rect x="198.5" y="320.5" width="25" height="31"/><rect x="198.5" y="352.5" width="25" height="25"/><rect x="224.5" y="352.5" width="31" height="25"/><rect x="256.5" y="352.5" width="31" height="25"/><rect x="288.5" y="352.5" width="31" height="25"/><rect x="320.5" y="352.5" width="31" height="25"/><rect x="352.5" y="352.5" width="31" height="25"/><rect x="384.5" y="352.5" width="31" height="25"/><rect x="416.5" y="352.5" width="31" height="25"/><rect x="448.5" y="352.5" width="31" height="25"/><rect x="480.5" y="352.5" width="31" height="25"/><rect x="512.5" y="352.5" width="31" height="25"/><rect x="544.5" y="352.5" width="31" height="25"/><rect x="576.5" y="352.5" width="31" height="25"/><rect x="608.5" y="352.5" width="31" height="25"/><rect x="640.5" y="352.5" width="31" height="25"/><rect x="672.5" y="352.5" width="25" height="25"/><rect x="672.5" y="192.5" width="25" height="31"/><rect x="672.5" y="224.5" width="25" height="31"/><rect x="672.5" y="256.5" width="25" height="31"/><rect x="672.5" y="288.5" width="25" height="31"/><rect x="672.5" y="320.5" width="25" height="31"/><rect x="672.5" y="166.5" width="25" height="25"/><rect x="448.5" y="166.5" width="31" height="25"/><rect x="480.5" y="166.5" width="31" height="25"/><rect x="512.5" y="166.5" width="31" height="25"/><rect x="544.5" y="166.5" width="31" height="25"/><rect x="576.5" y="166.5" width="31" height="25"/><rect x="608.5" y="166.5" width="31" height="25"/><rect x="640.5" y="166.5" width="31" height="25"/><rect x="416.5" y="0.5" width="25" height="31"/><rect x="416.5" y="32.5" width="25" height="31"/><rect x="416.5" y="64.5" width="25" height="31"/><rect x="416.5" y="96.5" width="25" height="31"/><rect x="416.5" y="128.5" width="25" height="31"/><rect x="416.5" y="160.5" width="31" height="31"/><rect x="870.5" y="166.5" width="25" height="25"/><rect x="896.5" y="166.5" width="31" height="25"/><rect x="928.5" y="166.5" width="31" height="25"/><rect x="960.5" y="166.5" width="31" height="25"/><rect x="992.5" y="166.5" width="31" height="25"/><rect x="870.5" y="192.5" width="25" height="31"/><rect x="870.5" y="224.5" width="25" height="31"/><rect x="870.5" y="256.5" width="25" height="31"/><rect x="870.5" y="288.5" width="25" height="31"/><rect x="870.5" y="320.5" width="25" height="31"/><rect x="870.5" y="352.5" width="25" height="25"/><rect x="896.5" y="352.5" width="31" height="25"/><rect x="928.5" y="352.5" width="31" height="25"/><rect x="960.5" y="352.5" width="31" height="25"/><rect x="992.5" y="352.5" width="31" height="25"/><rect x="160.5" y="550.5" width="31" height="25"/><rect x="192.5" y="550.5" width="31" height="25"/><rect x="224.5" y="550.5" width="31" height="25"/><rect x="256.5" y="550.5" width="31" height="25"/><rect x="288.5" y="550.5" width="31" height="25"/><rect x="320.5" y="550.5" width="31" height="25"/><rect x="352.5" y="550.5" width="31" height="25"/><rect x="384.5" y="550.5" width="31" height="25"/><rect x="416.5" y="550.5" width="31" height="25"/><rect x="448.5" y="550.5" width="31" height="25"/><rect x="480.5" y="550.5" width="31" height="25"/><rect x="512.5" y="550.5" width="31" height="25"/><rect x="544.5" y="550.5" width="31" height="25"/><rect x="576.5" y="550.5" width="31" height="25"/><rect x="608.5" y="550.5" width="31" height="25"/><rect x="640.5" y="550.5" width="31" height="25"/><rect x="672.5" y="550.5" width="25" height="25"/><rect x="672.5" y="576.5" width="25" height="31"/><rect x="672.5" y="608.5" width="25" height="31"/><rect x="672.5" y="640.5" width="25" height="31"/><rect x="672.5" y="672.5" width="25" height="31"/><rect x="672.5" y="704.5" width="25" height="31"/><rect x="672.5" y="736.5" width="25" height="31"/><rect x="870.5" y="550.5" width="25" height="25"/><rect x="896.5" y="550.5" width="31" height="25"/><rect x="928.5" y="550.5" width="31" height="25"/><rect x="960.5" y="550.5" width="31" height="25"/><rect x="992.5" y="550.5" width="31" height="25"/><rect x="870.5" y="576.5" width="25" height="31"/><rect x="870.5" y="608.5" width="25" height="31"/><rect x="870.5" y="640.5" width="25" height="31"/><rect x="870.5" y="672.5" width="25" height="31"/><rect x="870.5" y="704.5" width="25" height="31"/><rect x="870.5" y="736.5" width="25" height="31"/></g><g fill="none" stroke="#4f6573" opacity=".4" stroke-width="3"><rect x="18.5" y="2.5" width="21" height="27"/><rect x="18.5" y="34.5" width="21" height="27"/><rect x="18.5" y="66.5" width="21" height="27"/><rect x="18.5" y="98.5" width="21" height="27"/><rect x="18.5" y="130.5" width="21" height="27"/><rect x="18.5" y="162.5" width="21" height="27"/><rect x="18.5" y="194.5" width="21" height="27"/><rect x="18.5" y="226.5" width="21" height="27"/><rect x="18.5" y="258.5" width="21" height="27"/><rect x="18.5" y="290.5" width="21" height="27"/><rect x="18.5" y="322.5" width="21" height="27"/><rect x="18.5" y="354.5" width="21" height="27"/><rect x="18.5" y="386.5" width="21" height="27"/><rect x="18.5" y="418.5" width="21" height="27"/><rect x="18.5" y="450.5" width="21" height="27"/><rect x="18.5" y="482.5" width="21" height="27"/><rect x="18.5" y="514.5" width="21" height="27"/><rect x="18.5" y="546.5" width="21" height="27"/><rect x="18.5" y="578.5" width="21" height="27"/><rect x="18.5" y="610.5" width="21" height="27"/><rect x="18.5" y="642.5" width="21" height="27"/><rect x="18.5" y="674.5" width="21" height="27"/><rect x="18.5" y="706.5" width="21" height="27"/><rect x="18.5" y="738.5" width="21" height="27"/><rect x="200.5" y="2.5" width="21" height="27"/><rect x="200.5" y="34.5" width="21" height="27"/><rect x="200.5" y="66.5" width="21" height="27"/><rect x="200.5" y="98.5" width="21" height="27"/><rect x="200.5" y="130.5" width="21" height="27"/><rect x="200.5" y="162.5" width="21" height="27"/><rect x="200.5" y="194.5" width="21" height="27"/><rect x="200.5" y="226.5" width="21" height="27"/><rect x="200.5" y="258.5" width="21" height="27"/><rect x="200.5" y="290.5" width="21" height="27"/><rect x="200.5" y="322.5" width="21" height="27"/><rect x="200.5" y="354.5" width="21" height="21"/><rect x="226.5" y="354.5" width="27" height="21"/><rect x="258.5" y="354.5" width="27" height="21"/><rect x="290.5" y="354.5" width="27" height="21"/><rect x="322.5" y="354.5" width="27" height="21"/><rect x="354.5" y="354.5" width="27" height="21"/><rect x="386.5" y="354.5" width="27" height="21"/><rect x="418.5" y="354.5" width="27" height="21"/><rect x="450.5" y="354.5" width="27" height="21"/><rect x="482.5" y="354.5" width="27" height="21"/><rect x="514.5" y="354.5" width="27" height="21"/><rect x="546.5" y="354.5" width="27" height="21"/><rect x="578.5" y="354.5" width="27" height="21"/><rect x="610.5" y="354.5" width="27" height="21"/><rect x="642.5" y="354.5" width="27" height="21"/><rect x="674.5" y="354.5" width="21" height="21"/><rect x="674.5" y="194.5" width="21" height="27"/><rect x="674.5" y="226.5" width="21" height="27"/><rect x="674.5" y="258.5" width="21" height="27"/><rect x="674.5" y="290.5" width="21" height="27"/><rect x="674.5" y="322.5" width="21" height="27"/><rect x="674.5" y="168.5" width="21" height="21"/><rect x="450.5" y="168.5" width="27" height="21"/><rect x="482.5" y="168.5" width="27" height="21"/><rect x="514.5" y="168.5" width="27" height="21"/><rect x="546.5" y="168.5" width="27" height="21"/><rect x="578.5" y="168.5" width="27" height="21"/><rect x="610.5" y="168.5" width="27" height="21"/><rect x="642.5" y="168.5" width="27" height="21"/><rect x="418.5" y="2.5" width="21" height="27"/><rect x="418.5" y="34.5" width="21" height="27"/><rect x="418.5" y="66.5" width="21" height="27"/><rect x="418.5" y="98.5" width="21" height="27"/><rect x="418.5" y="130.5" width="21" height="27"/><rect x="418.5" y="162.5" width="27" height="27"/><rect x="872.5" y="168.5" width="21" height="21"/><rect x="898.5" y="168.5" width="27" height="21"/><rect x="930.5" y="168.5" width="27" height="21"/><rect x="962.5" y="168.5" width="27" height="21"/><rect x="994.5" y="168.5" width="27" height="21"/><rect x="872.5" y="194.5" width="21" height="27"/><rect x="872.5" y="226.5" width="21" height="27"/><rect x="872.5" y="258.5" width="21" height="27"/><rect x="872.5" y="290.5" width="21" height="27"/><rect x="872.5" y="322.5" width="21" height="27"/><rect x="872.5" y="354.5" width="21" height="21"/><rect x="898.5" y="354.5" width="27" height="21"/><rect x="930.5" y="354.5" width="27" height="21"/><rect x="962.5" y="354.5" width="27" height="21"/><rect x="994.5" y="354.5" width="27" height="21"/><rect x="162.5" y="552.5" width="27" height="21"/><rect x="194.5" y="552.5" width="27" height="21"/><rect x="226.5" y="552.5" width="27" height="21"/><rect x="258.5" y="552.5" width="27" height="21"/><rect x="290.5" y="552.5" width="27" height="21"/><rect x="322.5" y="552.5" width="27" height="21"/><rect x="354.5" y="552.5" width="27" height="21"/><rect x="386.5" y="552.5" width="27" height="21"/><rect x="418.5" y="552.5" width="27" height="21"/><rect x="450.5" y="552.5" width="27" height="21"/><rect x="482.5" y="552.5" width="27" height="21"/><rect x="514.5" y="552.5" width="27" height="21"/><rect x="546.5" y="552.5" width="27" height="21"/><rect x="578.5" y="552.5" width="27" height="21"/><rect x="610.5" y="552.5" width="27" height="21"/><rect x="642.5" y="552.5" width="27" height="21"/><rect x="674.5" y="552.5" width="21" height="21"/><rect x="674.5" y="578.5" width="21" height="27"/><rect x="674.5" y="610.5" width="21" height="27"/><rect x="674.5" y="642.5" width="21" height="27"/><rect x="674.5" y="674.5" width="21" height="27"/><rect x="674.5" y="706.5" width="21" height="27"/><rect x="674.5" y="738.5" width="21" height="27"/><rect x="872.5" y="552.5" width="21" height="21"/><rect x="898.5" y="552.5" width="27" height="21"/><rect x="930.5" y="552.5" width="27" height="21"/><rect x="962.5" y="552.5" width="27" height="21"/><rect x="994.5" y="552.5" width="27" height="21"/><rect x="872.5" y="578.5" width="21" height="27"/><rect x="872.5" y="610.5" width="21" height="27"/><rect x="872.5" y="642.5" width="21" height="27"/><rect x="872.5" y="674.5" width="21" height="27"/><rect x="872.5" y="706.5" width="21" height="27"/><rect x="872.5" y="738.5" width="21" height="27"/></g><g fill="none" stroke="#3a4e60"><rect x="231.5" y="7.5" width="145" height="305"/><rect x="423.5" y="215.5" width="241" height="97"/><rect x="903.5" y="215.5" width="145" height="97"/><rect x="903.5" y="583.5" width="145" height="97"/></g><rect x="224" y="320" width="160" height="3" fill="#4f6088"/><path d="M224 323H384L353 352H255Z" fill="url(#pAwn)"/><path d="M240 323L264.8 352" stroke="#0d1a3a" stroke-width=".8" opacity=".8"/><path d="M256 323L274.6 352" stroke="#0d1a3a" stroke-width=".8" opacity=".8"/><path d="M272 323L284.4 352" stroke="#0d1a3a" stroke-width=".8" opacity=".8"/><path d="M288 323L294.2 352" stroke="#0d1a3a" stroke-width=".8" opacity=".8"/><path d="M304 323L304.0 352" stroke="#0d1a3a" stroke-width=".8" opacity=".8"/><path d="M320 323L313.8 352" stroke="#0d1a3a" stroke-width=".8" opacity=".8"/><path d="M336 323L323.6 352" stroke="#0d1a3a" stroke-width=".8" opacity=".8"/><path d="M352 323L333.4 352" stroke="#0d1a3a" stroke-width=".8" opacity=".8"/><path d="M368 323L343.2 352" stroke="#0d1a3a" stroke-width=".8" opacity=".8"/><rect x="288.0" y="341" width="31" height="11" fill="#05070c" stroke="#0a0d14"/><path d="M303.5 342V352" stroke="#8a9bb0" stroke-width="1"/><path d="M293.0 344l4 1.5M314.0 344l-4 1.5" stroke="#3d4b60" stroke-width="1"/><rect x="416" y="320" width="256" height="3" fill="#4f6088"/><path d="M416 323H672L641 352H447Z" fill="url(#pAwn)"/><path d="M432 323L459.1 352" stroke="#0d1a3a" stroke-width=".8" opacity=".8"/><path d="M448 323L471.2 352" stroke="#0d1a3a" stroke-width=".8" opacity=".8"/><path d="M464 323L483.4 352" stroke="#0d1a3a" stroke-width=".8" opacity=".8"/><path d="M480 323L495.5 352" stroke="#0d1a3a" stroke-width=".8" opacity=".8"/><path d="M496 323L507.6 352" stroke="#0d1a3a" stroke-width=".8" opacity=".8"/><path d="M512 323L519.8 352" stroke="#0d1a3a" stroke-width=".8" opacity=".8"/><path d="M528 323L531.9 352" stroke="#0d1a3a" stroke-width=".8" opacity=".8"/><path d="M544 323L544.0 352" stroke="#0d1a3a" stroke-width=".8" opacity=".8"/><path d="M560 323L556.1 352" stroke="#0d1a3a" stroke-width=".8" opacity=".8"/><path d="M576 323L568.2 352" stroke="#0d1a3a" stroke-width=".8" opacity=".8"/><path d="M592 323L580.4 352" stroke="#0d1a3a" stroke-width=".8" opacity=".8"/><path d="M608 323L592.5 352" stroke="#0d1a3a" stroke-width=".8" opacity=".8"/><path d="M624 323L604.6 352" stroke="#0d1a3a" stroke-width=".8" opacity=".8"/><path d="M640 323L616.8 352" stroke="#0d1a3a" stroke-width=".8" opacity=".8"/><path d="M656 323L628.9 352" stroke="#0d1a3a" stroke-width=".8" opacity=".8"/><rect x="528.0" y="341" width="31" height="11" fill="#05070c" stroke="#0a0d14"/><path d="M543.5 342V352" stroke="#8a9bb0" stroke-width="1"/><path d="M533.0 344l4 1.5M554.0 344l-4 1.5" stroke="#3d4b60" stroke-width="1"/><rect x="896" y="320" width="256" height="3" fill="#4f6088"/><path d="M896 323H1152L1121 352H927Z" fill="url(#pAwn)"/><path d="M912 323L939.1 352" stroke="#0d1a3a" stroke-width=".8" opacity=".8"/><path d="M928 323L951.2 352" stroke="#0d1a3a" stroke-width=".8" opacity=".8"/><path d="M944 323L963.4 352" stroke="#0d1a3a" stroke-width=".8" opacity=".8"/><path d="M960 323L975.5 352" stroke="#0d1a3a" stroke-width=".8" opacity=".8"/><path d="M976 323L987.6 352" stroke="#0d1a3a" stroke-width=".8" opacity=".8"/><path d="M992 323L999.8 352" stroke="#0d1a3a" stroke-width=".8" opacity=".8"/><path d="M1008 323L1011.9 352" stroke="#0d1a3a" stroke-width=".8" opacity=".8"/><path d="M1024 323L1024.0 352" stroke="#0d1a3a" stroke-width=".8" opacity=".8"/><path d="M1040 323L1036.1 352" stroke="#0d1a3a" stroke-width=".8" opacity=".8"/><path d="M1056 323L1048.2 352" stroke="#0d1a3a" stroke-width=".8" opacity=".8"/><path d="M1072 323L1060.4 352" stroke="#0d1a3a" stroke-width=".8" opacity=".8"/><path d="M1088 323L1072.5 352" stroke="#0d1a3a" stroke-width=".8" opacity=".8"/><path d="M1104 323L1084.6 352" stroke="#0d1a3a" stroke-width=".8" opacity=".8"/><path d="M1120 323L1096.8 352" stroke="#0d1a3a" stroke-width=".8" opacity=".8"/><path d="M1136 323L1108.9 352" stroke="#0d1a3a" stroke-width=".8" opacity=".8"/><rect x="1008.0" y="341" width="31" height="11" fill="#05070c" stroke="#0a0d14"/><path d="M1023.5 342V352" stroke="#8a9bb0" stroke-width="1"/><path d="M1013.0 344l4 1.5M1034.0 344l-4 1.5" stroke="#3d4b60" stroke-width="1"/><rect x="896" y="688" width="256" height="3" fill="#4f6088"/><path d="M896 691H1152L1121 720H927Z" fill="url(#pAwn)"/><path d="M912 691L939.1 720" stroke="#0d1a3a" stroke-width=".8" opacity=".8"/><path d="M928 691L951.2 720" stroke="#0d1a3a" stroke-width=".8" opacity=".8"/><path d="M944 691L963.4 720" stroke="#0d1a3a" stroke-width=".8" opacity=".8"/><path d="M960 691L975.5 720" stroke="#0d1a3a" stroke-width=".8" opacity=".8"/><path d="M976 691L987.6 720" stroke="#0d1a3a" stroke-width=".8" opacity=".8"/><path d="M992 691L999.8 720" stroke="#0d1a3a" stroke-width=".8" opacity=".8"/><path d="M1008 691L1011.9 720" stroke="#0d1a3a" stroke-width=".8" opacity=".8"/><path d="M1024 691L1024.0 720" stroke="#0d1a3a" stroke-width=".8" opacity=".8"/><path d="M1040 691L1036.1 720" stroke="#0d1a3a" stroke-width=".8" opacity=".8"/><path d="M1056 691L1048.2 720" stroke="#0d1a3a" stroke-width=".8" opacity=".8"/><path d="M1072 691L1060.4 720" stroke="#0d1a3a" stroke-width=".8" opacity=".8"/><path d="M1088 691L1072.5 720" stroke="#0d1a3a" stroke-width=".8" opacity=".8"/><path d="M1104 691L1084.6 720" stroke="#0d1a3a" stroke-width=".8" opacity=".8"/><path d="M1120 691L1096.8 720" stroke="#0d1a3a" stroke-width=".8" opacity=".8"/><path d="M1136 691L1108.9 720" stroke="#0d1a3a" stroke-width=".8" opacity=".8"/><rect x="1008.0" y="709" width="31" height="11" fill="#05070c" stroke="#0a0d14"/><path d="M1023.5 710V720" stroke="#8a9bb0" stroke-width="1"/><path d="M1013.0 712l4 1.5M1034.0 712l-4 1.5" stroke="#3d4b60" stroke-width="1"/><rect x="160" y="568" width="194" height="16" fill="url(#pFen)"/><rect x="160" y="568" width="194" height="2" fill="#4c606e"/><path d="M203 569l14 14" stroke="#50656f" stroke-width="1.3"/><path d="M267 569l14 14" stroke="#50656f" stroke-width="1.3"/><path d="M331 569l14 14" stroke="#50656f" stroke-width="1.3"/><rect x="416" y="568" width="241" height="16" fill="url(#pFen)"/><rect x="416" y="568" width="241" height="2" fill="#4c606e"/><path d="M418 569l14 14" stroke="#50656f" stroke-width="1.3"/><path d="M482 569l14 14" stroke="#50656f" stroke-width="1.3"/><path d="M546 569l14 14" stroke="#50656f" stroke-width="1.3"/><path d="M610 569l14 14" stroke="#50656f" stroke-width="1.3"/><rect x="656" y="568" width="16" height="192" fill="url(#pFen)"/><rect x="656" y="568" width="2" height="192" fill="#4c606e"/><path d="M657 570l14 14" stroke="#50656f" stroke-width="1.3"/><path d="M657 640l14 14" stroke="#50656f" stroke-width="1.3"/><path d="M657 710l14 14" stroke="#50656f" stroke-width="1.3"/><rect x="160" y="752" width="512" height="8" fill="url(#pFen)"/><rect x="160" y="750" width="497" height="2" fill="#4c606e"/><rect x="0" y="0" width="16" height="760" fill="url(#pFen)"/><rect x="0" y="0" width="2" height="760" fill="#4c606e"/><path d="M1 40l14 14" stroke="#50656f" stroke-width="1.3"/><path d="M1 136l14 14" stroke="#50656f" stroke-width="1.3"/><path d="M1 232l14 14" stroke="#50656f" stroke-width="1.3"/><path d="M1 328l14 14" stroke="#50656f" stroke-width="1.3"/><path d="M1 424l14 14" stroke="#50656f" stroke-width="1.3"/><path d="M1 520l14 14" stroke="#50656f" stroke-width="1.3"/><path d="M1 616l14 14" stroke="#50656f" stroke-width="1.3"/><path d="M1 712l14 14" stroke="#50656f" stroke-width="1.3"/><path d="M384 0H706L720 16H384Z" fill="url(#pFen)"/><rect x="384" y="0" width="322" height="2" fill="#4c606e"/><path d="M706 0l14 16" stroke="#50656f" stroke-width="1.3"/><path d="M418 2l12 14" stroke="#50656f" stroke-width="1.3"/><path d="M482 2l12 14" stroke="#50656f" stroke-width="1.3"/><path d="M546 2l12 14" stroke="#50656f" stroke-width="1.3"/><path d="M610 2l12 14" stroke="#50656f" stroke-width="1.3"/><path d="M674 2l12 14" stroke="#50656f" stroke-width="1.3"/><path d="M847 0H1020V16H861Z" fill="url(#pFen)"/><path d="M847 0l14 16" stroke="#50656f" stroke-width="1.3"/><rect x="847" y="0" width="173" height="2" fill="#4c606e"/><path d="M911 2l12 14" stroke="#50656f" stroke-width="1.3"/><path d="M975 2l12 14" stroke="#50656f" stroke-width="1.3"/><clipPath id="cA"><rect x="0" y="378" width="1020" height="120"/></clipPath><clipPath id="cB"><rect x="0" y="340" width="1020" height="38"/></clipPath><g clip-path="url(#cA)"><circle cx="248" cy="392" r="39" fill="url(#gLight)"/><circle cx="344" cy="392" r="39" fill="url(#gLight)"/><circle cx="440" cy="392" r="39" fill="url(#gLight)"/><circle cx="536" cy="392" r="39" fill="url(#gLight)"/><circle cx="632" cy="392" r="39" fill="url(#gLight)"/></g><g clip-path="url(#cB)" opacity=".45"><circle cx="248" cy="392" r="39" fill="url(#gLight2)"/><circle cx="344" cy="392" r="39" fill="url(#gLight2)"/><circle cx="440" cy="392" r="39" fill="url(#gLight2)"/><circle cx="536" cy="392" r="39" fill="url(#gLight2)"/><circle cx="632" cy="392" r="39" fill="url(#gLight2)"/></g><path d="M244.5 386.5h7l2 2v7l-2 2h-7l-2-2v-7z" fill="#272c33" stroke="#020305" stroke-width="1.2"/><path d="M242 386l2.500 2.500M254 386l-2.500 2.500M242 398l2.500-2.500M254 398l-2.500-2.500" stroke="#020305" stroke-width="2"/><circle cx="248" cy="392" r="2.800" fill="#343a42"/><path d="M340.5 386.5h7l2 2v7l-2 2h-7l-2-2v-7z" fill="#272c33" stroke="#020305" stroke-width="1.2"/><path d="M338 386l2.500 2.500M350 386l-2.500 2.500M338 398l2.500-2.500M350 398l-2.500-2.500" stroke="#020305" stroke-width="2"/><circle cx="344" cy="392" r="2.800" fill="#343a42"/><path d="M436.5 386.5h7l2 2v7l-2 2h-7l-2-2v-7z" fill="#272c33" stroke="#020305" stroke-width="1.2"/><path d="M434 386l2.500 2.500M446 386l-2.500 2.500M434 398l2.500-2.500M446 398l-2.500-2.500" stroke="#020305" stroke-width="2"/><circle cx="440" cy="392" r="2.800" fill="#343a42"/><path d="M532.5 386.5h7l2 2v7l-2 2h-7l-2-2v-7z" fill="#272c33" stroke="#020305" stroke-width="1.2"/><path d="M530 386l2.500 2.500M542 386l-2.500 2.500M530 398l2.500-2.500M542 398l-2.500-2.500" stroke="#020305" stroke-width="2"/><circle cx="536" cy="392" r="2.800" fill="#343a42"/><path d="M628.5 386.5h7l2 2v7l-2 2h-7l-2-2v-7z" fill="#272c33" stroke="#020305" stroke-width="1.2"/><path d="M626 386l2.500 2.500M638 386l-2.500 2.500M626 398l2.500-2.500M638 398l-2.500-2.500" stroke="#020305" stroke-width="2"/><circle cx="632" cy="392" r="2.800" fill="#343a42"/><circle cx="400.5" cy="32" r="7.4" fill="#9b9b9b" stroke="#05080c" stroke-width="1"/><circle cx="400.5" cy="32" r="5" fill="none" stroke="#76869c" stroke-width="1"/><circle cx="400.5" cy="32" r="2.800" fill="none" stroke="#76869c" stroke-width="1"/><path d="M398.0 29.5l5 5" stroke="#0a0c10" stroke-width="2.200"/><circle cx="424.5" cy="32" r="7.4" fill="#9b9b9b" stroke="#05080c" stroke-width="1"/><circle cx="424.5" cy="32" r="5" fill="none" stroke="#76869c" stroke-width="1"/><circle cx="424.5" cy="32" r="2.800" fill="none" stroke="#76869c" stroke-width="1"/><path d="M422.0 29.5l5 5" stroke="#0a0c10" stroke-width="2.200"/><circle cx="408.5" cy="48" r="7.4" fill="#9b9b9b" stroke="#05080c" stroke-width="1"/><circle cx="408.5" cy="48" r="5" fill="none" stroke="#76869c" stroke-width="1"/><circle cx="408.5" cy="48" r="2.800" fill="none" stroke="#76869c" stroke-width="1"/><path d="M406.0 45.5l5 5" stroke="#0a0c10" stroke-width="2.200"/><circle cx="632" cy="600" r="7.4" fill="#9b9b9b" stroke="#05080c" stroke-width="1"/><circle cx="632" cy="600" r="5" fill="none" stroke="#76869c" stroke-width="1"/><circle cx="632" cy="600" r="2.800" fill="none" stroke="#76869c" stroke-width="1"/><path d="M629.5 597.5l5 5" stroke="#0a0c10" stroke-width="2.200"/><circle cx="640" cy="624" r="7.4" fill="#9b9b9b" stroke="#05080c" stroke-width="1"/><circle cx="640" cy="624" r="5" fill="none" stroke="#76869c" stroke-width="1"/><circle cx="640" cy="624" r="2.800" fill="none" stroke="#76869c" stroke-width="1"/><path d="M637.5 621.5l5 5" stroke="#0a0c10" stroke-width="2.200"/></symbol>
</defs></svg>

<div class="win" style="left:215px;top:94px;width:708px;height:580px;overflow:hidden">
<div class="cap off"><svg class="a" style="left:1px;top:1px" width="16" height="16" ><use href="#ball"/></svg><div class="t" style="left:20px;top:2px;letter-spacing:-.2px">Player</div><div class="cb" style="right:36px"><div class="a" style="left:3px;top:8px;width:6px;height:2px;background:#000"></div></div><div class="cb" style="right:20px"><div class="a" style="left:2px;top:1px;width:9px;height:9px;border:1px solid #000;border-top-width:2px"></div></div><div class="cb" style="right:2px"><svg class="a" style="left:3px;top:2px" width="8" height="7"><path d="M0 0 8 7M8 0 0 7" stroke="#000" stroke-width="1.6"/></svg></div></div>
<div class="tb" style="left:3px;top:21px;width:700px"><div class="grip"></div>
<svg class="a" style="left:9px;top:5px" width="16" height="16" ><use href="#chk"/></svg>
<div class="t" style="left:28px;top:6px">Accept</div>
<svg class="a" style="left:461px;top:5px" width="16" height="16" ><use href="#lst"/></svg>
<div class="t" style="left:479px;top:6px">Select One</div>
<svg class="a" style="left:540px;top:5px" width="16" height="16" ><use href="#lst"/></svg>
<div class="t" style="left:558px;top:6px">Select Many</div>
<div class="a" style="left:626px;top:4px;width:1px;height:17px;background:#a5a9bf;box-shadow:1px 0 #fff"></div>
<svg class="a" style="left:630px;top:4px" width="16" height="16" viewBox="0 0 16 16"><path d="M2.5 1.5H9.5L13 5V14.5H2.5Z" fill="#fdfdfd" stroke="#a6a9b0"/><path d="M9.5 1.5V5H13" fill="#e6e8ee" stroke="#a6a9b0" stroke-width=".8"/></svg>
<div class="t" style="left:649px;top:6px">Select All</div>
</div>
<div class="t" style="left:15px;top:58px">Name:</div>
<div class="sunk" style="left:15px;top:73px;width:186px;height:20px"><div class="t" style="left:2px;top:2px">Player</div></div>
<div class="grp" style="left:15px;top:106px;width:185px;height:84px"><span>Sprite</span></div>
<div class="a" style="left:21px;top:120px;width:64px;height:64px;background:#fff"></div>
<svg class="a" style="left:42px;top:140px" width="26" height="24" ><use href="#plyr"/></svg>
<div class="sunk" style="left:91px;top:120px;width:103px;height:21px"><div class="t" style="left:2px;top:3px">char_player</div><div class="btn" style="right:1px;top:1px;width:16px;height:17px"><div class="tri" style="left:3px;top:6px;border-top-color:#000;border-bottom-width:0"></div></div></div>
<div class="t" style="left:108px;top:146px">Frame:</div>
<div class="btn" style="left:149px;top:142px;width:22px;height:21px"><div class="tri" style="left:6px;top:5px;border-right:6px solid #808080;border-left-width:0;border-top-width:5px;border-bottom-width:5px"></div></div>
<div class="btn" style="left:173px;top:142px;width:22px;height:21px"><div class="tri" style="left:8px;top:5px;border-left:6px solid #000;border-right-width:0;border-top-width:5px;border-bottom-width:5px"></div></div>
<div class="btn" style="left:91px;top:164px;width:104px;height:21px"><div class="t" style="left:0;right:0;top:3px">Open Sprite</div></div>
<div class="sunk" style="left:15px;top:197px;width:186px;height:303px"></div>
<div class="a" style="left:17px;top:199px;width:182px;height:24px;background:linear-gradient(90deg,rgba(255,255,255,0) 55%,#fff 100%),linear-gradient(#f6f6f6,#e9eaea 50%,#d6d8da)"></div>
<div class="a" style="left:19px;top:201px;width:20px;height:20px;background:#fff;border-radius:4px"></div>
<svg class="a" style="left:21px;top:203px" width="16" height="16" viewBox="0 0 16 16"><circle cx="8" cy="8.600" r="6" fill="#f2f4fa" stroke="#c8583c" stroke-width="1.300"/><path d="M8 4.600V8.800H5" fill="none" stroke="#333" stroke-width="1"/><path d="M2.200 3.800 4.800 1.500M13.800 3.800 11.200 1.500" stroke="#e2b04a" stroke-width="2.400" stroke-linecap="round"/><path d="M3.6 14.6 4.8 13.2M12.4 14.6 11.2 13.2" stroke="#999" stroke-width="1.2"/></svg>
<div class="t act" style="left:43px;top:204px">Step</div>
<svg class="a" style="left:21px;top:227px" width="16" height="16" viewBox="0 0 16 16"><path d="M8 1.2A4.4 4.4 0 0 1 10.6 9.2Q10 9.9 10 11H6Q6 9.9 5.4 9.2A4.4 4.4 0 0 1 8 1.2Z" fill="#ffe680" stroke="#d9a520" stroke-width=".9"/><path d="M6.8 4.2A2 2 0 0 0 6 6" stroke="#fff" stroke-width="1" fill="none"/><rect x="6.1" y="11.2" width="3.8" height="3" rx=".8" fill="#9a9a9a" stroke="#6e6e6e" stroke-width=".6"/></svg>
<div class="t act" style="left:43px;top:228px">Create</div>
<svg class="a" style="left:21px;top:251px" width="16" height="16" ><use href="#evt"/></svg>
<div class="t act" style="left:43px;top:252px">L Button Press</div>
<svg class="a" style="left:21px;top:275px" width="16" height="16" viewBox="0 0 16 16"><path d="M.6 8H6M4 5.6 6.6 8 4 10.4M15.4 8H10M12 5.6 9.4 8 12 10.4" fill="none" stroke="#3f8fe0" stroke-width="1.5"/><path d="M8 5.5V10.5" stroke="#9cc8f4" stroke-width="1"/></svg>
<div class="t act" style="left:43px;top:276px">Collision with obj_enemy</div>
<svg class="a" style="left:21px;top:299px" width="16" height="16" ><use href="#evt"/></svg>
<div class="t act" style="left:43px;top:300px">B Button Press</div>
<svg class="a" style="left:21px;top:323px" width="16" height="16" ><use href="#evt"/></svg>
<div class="t act" style="left:43px;top:324px">R Button Press</div>
<svg class="a" style="left:21px;top:347px" width="16" height="16" ><use href="#evt"/></svg>
<div class="t act" style="left:43px;top:348px">Select Button Press</div>
<svg class="a" style="left:21px;top:371px" width="16" height="16" ><use href="#evt"/></svg>
<div class="t act" style="left:43px;top:372px">L Button Held</div>
<svg class="a" style="left:21px;top:395px" width="16" height="16" ><use href="#evt"/></svg>
<div class="t act" style="left:43px;top:396px">Start Button Press</div>
<div class="btn" style="left:15px;top:504px;width:186px;height:27px"><div class="t" style="left:0;right:0;top:7px">Add Event</div></div>
<div class="btn" style="left:15px;top:535px;width:92px;height:27px"><div class="t" style="left:0;right:0;top:7px">Change</div></div>
<div class="btn" style="left:109px;top:535px;width:92px;height:27px"><div class="t" style="left:0;right:0;top:7px">Delete</div></div>
<div class="sunk" style="left:213px;top:47px;width:490px;height:367px"></div>
<svg class="a" style="left:217px;top:51px" width="32" height="32" ><use href="#abtn"/></svg><svg class="a" style="left:225px;top:59px;margin:-2px 0 0 -2px" width="19" height="19"><use href="#scroll"/></svg><div class="t act" style="left:253px;top:55px">Execute a piece of Code</div><div class="t act sub" style="left:253px;top:68px">int fps; .. fps = 24; .. &nbsp;.. 'Walking .. int walkFrstFrame; .. int walkLastFrame; .. int</div>
<svg class="a" style="left:217px;top:87px" width="32" height="32" ><use href="#abtn"/></svg><svg class="a" style="left:225px;top:95px;margin:-2px 0 0 -2px" width="19" height="19"><use href="#scroll"/></svg><div class="t act" style="left:253px;top:91px">Execute a piece of Code</div><div class="t act sub" style="left:253px;top:104px">'Fade in Code=================================== .. &nbsp;.. 'Variables</div>
<svg class="a" style="left:217px;top:123px" width="32" height="32" ><use href="#abtn"/></svg><svg class="a" style="left:225px;top:131px;margin:-2px 0 0 -2px" width="19" height="19"><use href="#scroll"/></svg><div class="t act" style="left:253px;top:127px">Execute a piece of Code</div><div class="t act sub" style="left:253px;top:140px">&nbsp;.. 'Ensure that when the player</div>
<svg class="a" style="left:217px;top:159px" width="32" height="32" ><use href="#abtn"/></svg><svg class="a" style="left:225px;top:167px;margin:-2px 0 0 -2px" width="20" height="20" viewBox="0 0 20 20"><circle cx="10" cy="10.500" r="6.700" fill="none" stroke="#dedede" stroke-width="1.100"/><circle cx="10" cy="10.500" r="4" fill="none" stroke="#e4e4e4" stroke-width="1.100"/><path d="M7 3.800H13.400L10.800 9.500H9.200Z" fill="#c4c4c4" stroke="#ececec" stroke-width=".7"/><rect x="9" y="9.300" width="2.200" height="2.600" fill="#2c2c2c"/></svg><div class="t act" style="left:253px;top:163px">Set Rotation Angle</div><div class="t act sub" style="left:253px;top:176px">Arguments of angle</div>
<svg class="a" style="left:217px;top:195px" width="32" height="32" ><use href="#abtnd"/></svg><svg class="a" style="left:225px;top:203px;margin:-2px 0 0 -2px" width="28" height="28" viewBox="0 0 28 28"><circle cx="10.400" cy="12.300" r="6" fill="#eeeef4" stroke="#8e8e8e" stroke-width="1"/><path d="M10.400 7.500V12.500H14.600" fill="none" stroke="#222" stroke-width="1"/><circle cx="20.300" cy="20.400" r="3.600" fill="#fff" stroke="#2a3fd0" stroke-width="1"/><text x="20.300" y="22.600" font-size="6" font-weight="bold" fill="#2a3fd0" text-anchor="middle" font-family="Liberation Sans, sans-serif">?</text></svg><div class="t act" style="left:253px;top:199px">If Alarm 0 Rings</div><div class="t act sub" style="left:253px;top:212px">Arguments of 0</div>
<svg class="a" style="left:240px;top:238px" width="34" height="19" viewBox="0 0 34 19"><path d="M17 1.500 32.500 17.500H1.500Z" fill="url(#gTriU)" stroke="#3a3a3a" stroke-width="1"/></svg>
<div class="t act" style="left:277px;top:239px">Start Block</div>
<svg class="a" style="left:241px;top:267px" width="32" height="32" ><use href="#abtn"/></svg>
<svg class="a" style="left:248px;top:274px" width="20" height="20" viewBox="0 0 20 20"><circle cx="8" cy="8" r="6.6" fill="url(#gBall)"/><rect x="5.6" y="6.6" width="9" height="9" fill="#20305e" stroke="#dfe6f4" stroke-width=".7"/><rect x="7.6" y="8.4" width="1.8" height="5.4" fill="#cfe0ff"/><rect x="10.8" y="8.4" width="1.8" height="5.4" fill="#cfe0ff"/></svg>
<div class="t act" style="left:277px;top:270px">Pause Animation</div><div class="t act sub" style="left:277px;top:283px">Arguments of</div>
<svg class="a" style="left:240px;top:310px" width="34" height="19" viewBox="0 0 34 19"><path d="M17 17.500 32.500 1.500H1.500Z" fill="url(#gTriD)" stroke="#3a3a3a" stroke-width="1"/></svg>
<div class="t act" style="left:277px;top:311px">End Block</div>
<svg class="a" style="left:217px;top:339px" width="32" height="32" ><use href="#abtn"/></svg>
<div class="t act" style="left:253px;top:342px">Set Color on Top Screen</div><div class="t act sub" style="left:253px;top:355px">Arguments of 1, 31</div>
<div class="a" style="left:213px;top:435px;width:491px;height:140px;border-top:1px solid #fff;border-left:1px solid #fff"></div>
<div class="a" style="left:213px;top:415px;width:51px;height:22px;background:#d4d0c8;border:1px solid;border-color:#fff #404040 transparent #fff;border-radius:2px 2px 0 0;box-shadow:inset -1px 0 #808080"><div class="t" style="left:5px;top:3px">Objects</div></div>
<div class="a" style="left:265px;top:418px;width:40px;height:18px;border:1px solid;border-color:#fff #404040 transparent #fff;border-radius:2px 2px 0 0;box-shadow:inset -1px 0 #808080"><div class="t" style="left:4px;top:2px">Media</div></div>
<div class="a" style="left:306px;top:418px;width:60px;height:18px;border:1px solid;border-color:#fff #404040 transparent #fff;border-radius:2px 2px 0 0"><div class="t" style="left:4px;top:2px">Control</div></div>
<svg class="a" style="left:227px;top:447px" width="32" height="32" ><use href="#abtn"/></svg>
<svg class="a" style="left:233px;top:453px" width="20" height="20" viewBox="0 0 20 20"><circle cx="9" cy="9" r="7.4" fill="url(#gBall)"/><rect x="7" y="7" width="9" height="9" fill="#1b2a5c" stroke="#e4ecff" stroke-width=".6"/><rect x="9" y="8.600" width="5" height="2.600" fill="#b8c8e8"/><rect x="9" y="12" width="5" height="2.600" fill="#b8c8e8"/></svg>
<svg class="a" style="left:269px;top:447px" width="32" height="32" ><use href="#abtn"/></svg>
<svg class="a" style="left:277px;top:455px" width="16" height="16" ><use href="#pac"/></svg>
<svg class="a" style="left:311px;top:447px" width="32" height="32" ><use href="#abtn"/></svg>
<svg class="a" style="left:317px;top:453px" width="20" height="20" viewBox="0 0 20 20"><circle cx="10" cy="10" r="8" fill="url(#gBall)"/><path d="M10 3.500A4 4 0 0 1 12.400 10.700Q12 11.500 12 12.500H8Q8 11.500 7.600 10.700A4 4 0 0 1 10 3.500Z" fill="#ffe680" stroke="#c89a20" stroke-width=".6"/><rect x="8.300" y="12.800" width="3.400" height="3" fill="#bdbdbd"/></svg>
<svg class="a" style="left:227px;top:489px" width="32" height="32" ><use href="#abtnd"/></svg>
<svg class="a" style="left:233px;top:495px" width="20" height="20" viewBox="0 0 20 20"><circle cx="9" cy="9" r="7.4" fill="url(#gBall)"/><rect x="7" y="7" width="9" height="9" fill="#1b2a5c" stroke="#e4ecff" stroke-width=".6"/><rect x="9" y="8.600" width="5" height="2.600" fill="#b8c8e8"/><rect x="9" y="12" width="5" height="2.600" fill="#b8c8e8"/></svg>
<svg class="a" style="left:269px;top:489px" width="32" height="32" ><use href="#abtnd"/></svg>
<svg class="a" style="left:275px;top:495px" width="22" height="22" viewBox="0 0 22 22"><path d="M6 1.500H2.500V16.500H6" fill="none" stroke="#fff" stroke-width="1.800"/><circle cx="9" cy="7" r="3.300" fill="url(#gBall)"/><circle cx="13" cy="13" r="3.300" fill="url(#gBall)"/><circle cx="17.500" cy="17.500" r="3.200" fill="#2a4fd8" stroke="#e8ecff" stroke-width=".6"/><text x="17.500" y="19.600" font-size="5.500" font-weight="bold" fill="#fff" text-anchor="middle" font-family="Liberation Sans, sans-serif">?</text></svg>
<svg class="a" style="left:311px;top:489px" width="32" height="32" ><use href="#abtn"/></svg>
<svg class="a" style="left:227px;top:531px" width="32" height="32" ><use href="#abtn"/></svg>
<svg class="a" style="left:233px;top:537px" width="20" height="20" viewBox="0 0 20 20"><circle cx="10" cy="10" r="8" fill="url(#gBall)"/><path d="M3 11H17" stroke="#fff" stroke-width="1.200" stroke-dasharray="1.500 1"/></svg>
<svg class="a" style="left:248px;top:509px" width="9" height="9"><use href="#qm"/></svg>
</div>
<div class="win" style="left:843px;top:131px;width:1027px;height:840px">
<div class="cap off" style="top:3px;left:3px;right:3px"><svg class="a" style="left:2px;top:2px" width="16" height="14" viewBox="0 0 16 14"><rect x=".5" y=".5" width="15" height="13" fill="#e8eef6" stroke="#6f7f95"/><rect x="2" y="2" width="12" height="10" fill="#4a86c8"/><path d="M2 12V9.5L6 6.5 9 9 11 7.5 14 10V12Z" fill="#dfe8d8"/></svg><div class="t" style="left:19px;top:2px;letter-spacing:-.25px">Background_1</div><div class="cb" style="right:36px"><div class="a" style="left:3px;top:8px;width:6px;height:2px;background:#000"></div></div><div class="cb" style="right:20px"><div class="a" style="left:2px;top:1px;width:9px;height:9px;border:1px solid #000;border-top-width:2px"></div></div><div class="cb" style="right:2px"><svg class="a" style="left:3px;top:2px" width="8" height="7"><path d="M0 0 8 7M8 0 0 7" stroke="#000" stroke-width="1.6"/></svg></div></div>
<div class="tb" style="left:3px;top:21px;width:1019px"><div class="grip"></div>
<svg class="a" style="left:8px;top:5px" width="16" height="16" ><use href="#chk"/></svg>
<div class="t" style="left:26px;top:6px">Accept</div>
<div class="a" style="left:69px;top:4px;width:1px;height:17px;background:#a5a9bf;box-shadow:1px 0 #fff"></div>
<svg class="a" style="left:73px;top:4px" width="16" height="16" viewBox="0 0 16 16"><path d="M2 14.5 3 11 11.8 2.2 14 4.4 5.2 13.2Z" fill="#f2c24a" stroke="#b8862a" stroke-width=".7"/><path d="M2 14.5 3 11 5.2 13.2Z" fill="#f6e2c0"/><path d="M11.8 2.2 13 1 15.2 3.2 14 4.4Z" fill="#e87a6a"/></svg>
<div class="t" style="left:92px;top:6px">Edit</div>
<svg class="a" style="left:120px;top:5px" width="16" height="16" ><use href="#fold"/></svg>
<div class="t" style="left:137px;top:6px;letter-spacing:-.15px">Load from File</div>
</div>
<div class="a" style="left:3px;top:46px;width:1019px;height:789px;background:#c3c3c3"></div>
<svg class="a" style="left:3px;top:47px" width="1019" height="760" viewBox="1 0 1019 760"><use href="#map" x="0" y="0" width="1020" height="760"/></svg>
</div>
<div class="win" style="left:563px;top:230px;width:468px;height:741px;overflow:hidden">
<div class="cap on"><svg class="a" style="left:2px;top:2px" width="16" height="14" viewBox="0 0 16 14"><rect x=".5" y=".5" width="15" height="13" rx="1" fill="#f4f4f4" stroke="#3f6fb8"/><rect x=".5" y=".5" width="15" height="3.500" fill="#4a86d8"/><rect x="2" y="5" width="12" height="7.500" fill="#e4e4e4"/></svg><div class="t" style="left:20px;top:2px;letter-spacing:-.2px">Room_0</div><div class="cb" style="right:36px"><div class="a" style="left:3px;top:8px;width:6px;height:2px;background:#000"></div></div><div class="cb" style="right:20px"><div class="a" style="left:2px;top:1px;width:9px;height:9px;border:1px solid #000;border-top-width:2px"></div></div><div class="cb" style="right:2px"><svg class="a" style="left:3px;top:2px" width="8" height="7"><path d="M0 0 8 7M8 0 0 7" stroke="#000" stroke-width="1.6"/></svg></div></div>
<div class="tb" style="left:3px;top:21px;width:460px"><div class="grip"></div><svg class="a" style="left:9px;top:5px" width="16" height="16" ><use href="#chk"/></svg><div class="t" style="left:28px;top:6px">Accept</div></div>
<div class="a" style="left:455px;top:48px;width:8px;height:688px;background:#e0e0e0"></div>
<div class="a" style="left:3px;top:68px;width:178px;height:668px;border:1px solid;border-color:#fff #404040 transparent #fff;box-shadow:inset -1px 0 #808080"></div>
<div class="a" style="left:5px;top:50px;width:48px;height:18px;border:1px solid;border-color:#fff #404040 transparent #fff;border-radius:2px 2px 0 0;box-shadow:inset -1px 0 #808080"><div class="t" style="left:4px;top:2px">General</div></div>
<div class="a" style="left:52px;top:48px;width:49px;height:21px;background:#d4d0c8;border:1px solid;border-color:#fff #404040 transparent #fff;border-radius:2px 2px 0 0;box-shadow:inset -1px 0 #808080"><div class="t" style="left:5px;top:3px">Design</div></div>
<div class="t" style="left:17px;top:82px">Object to Plot:</div>
<div class="sunk" style="left:15px;top:97px;width:154px;height:21px"><div class="btn" style="right:1px;top:1px;width:16px;height:17px"><div class="tri" style="left:3px;top:6px;border-top-color:#000;border-bottom-width:0"></div></div></div>
<div class="grp" style="left:15px;top:140px;width:154px;height:137px"><span>Snap Settings</span></div>
<div class="chk" style="left:25px;top:154px"></div><div class="t" style="left:44px;top:156px">Snap Objects to Grid</div>
<div class="chk" style="left:25px;top:174px"></div><div class="t" style="left:44px;top:176px">Show Grid</div>
<div class="t" style="left:63px;top:194px">Snap X:</div><div class="sunk" style="left:112px;top:190px;width:52px;height:21px"><div class="t" style="left:1px;top:3px">32</div></div>
<div class="t" style="left:63px;top:219px">Snap Y:</div><div class="sunk" style="left:112px;top:215px;width:52px;height:21px"><div class="t" style="left:1px;top:3px">16</div></div>
<div class="btn" style="left:65px;top:242px;width:99px;height:27px"><div class="a" style="left:4px;top:5px;width:15px;height:15px;border-radius:50%;background:conic-gradient(#f55,#fb4,#cf4,#4e6,#4df,#77f,#e5e,#f55);box-shadow:inset 0 0 3px 1px rgba(255,255,255,.6),0 1px 1px #999"></div><div class="t" style="left:23px;top:6px">Set Grid Color</div></div>
<div class="grp" style="left:15px;top:290px;width:154px;height:83px"><span>Object(s) under Mouse</span></div>
<div class="t" style="left:3px;top:378px;width:160px;text-align:right">Cursor Position: 164, 2</div>
<div class="t" style="left:3px;top:391px;width:160px;text-align:right">Cursor Position (snap): 160, 0</div>
<div class="t" style="left:3px;top:413px;width:147px;text-align:right">Use Right-Click Menu</div>
<div class="chk" style="left:156px;top:411px"><svg class="a" style="left:2px;top:2px" width="7" height="7" viewBox="0 0 7 7"><path d="M0 2.500 2.500 5 7 .5V2.500L2.500 7 0 4.500Z" fill="#000"/></svg></div>
<svg class="a" style="left:182px;top:48px" width="256" height="325" viewBox="0 1 256 325"><use href="#map" x="0" y="0" width="1020" height="760"/><path d="M0 191.500H256" stroke="#a9adb2" stroke-width="1"/><rect x="224" y="257" width="32" height="9" fill="#6f95a7"/><path d="M224 257.500H256M224 265.500H256" stroke="#40566a" opacity=".6"/></svg>
<div class="a" style="left:246px;top:96px;width:30px;height:30px;border-radius:50%;background:radial-gradient(circle at 45% 35%,#fff 0,#eee 45%,#c8c8c8 80%,#a8a8a8 100%);box-shadow:0 0 0 1px #8e8e8e,0 1px 2px 1px rgba(0,0,0,.5)"><div class="t" style="left:0;width:30px;top:3px;height:24px;line-height:24px;text-align:center;font:bold 24px 'Liberation Sans',sans-serif;color:#9c9c9c">?</div></div>
<svg class="a" style="left:302px;top:138px" width="50" height="50" viewBox="0 0 50 50"><path d="M9 2.400 16.200 .600 23.500 4.200 24.700 8.400 21 12 22.300 16.200 29.500 23.500 39 28.900 47.500 34.900 46.300 38.500 41.500 36.700 29.500 31.900 26.500 33.700 27 39.700 35.500 45.700 33 48 24.700 45 19.900 43.300 19.300 34.900 16.200 27.700 11.400 24.700 8.400 27.700 11.400 33.700 11.400 37.900 6.600 37.300 3 31.300 2.400 25.300 6 18 5.400 13.200 2.400 10.800 4.200 7.800 9 6.600 12.600 10.200 17.400 9 19.300 6 16.200 3.600 11.400 4.800Z" fill="none" stroke="#fff" stroke-width="1.1" stroke-linejoin="round"/></svg>
<svg class="a" style="left:282px;top:195px" width="26" height="24" ><use href="#plyr"/></svg>
<svg class="a" style="left:411px;top:206px" width="25" height="17" viewBox="0 0 25 17"><path d="M.500 3Q.500 1.200 2.400 1.200H20.200L21.300 .600 23 1.700 24.100 3.900 23.800 6.700 22.400 7.800 23.800 13.300 22.400 15.600H16.900L15.800 12.200 13 10.600 10.200 10 2.400 9.400 .500 7.200Z" fill="#000" stroke="#fff" stroke-width="1"/><path d="M12 8.700h2" stroke="#fff" stroke-width=".8"/></svg>
<div class="a" style="left:405px;top:224px;width:32px;height:7px;background:#08d020;border:1px solid #f4fff4"></div>
<div class="a" style="left:439px;top:48px;width:16px;height:325px;background:#eae8e4"></div>
<div class="btn" style="left:439px;top:48px;width:16px;height:16px"><div class="tri" style="left:3px;top:4px;border-bottom:4px solid #000;border-top-width:0"></div></div>
<div class="btn" style="left:439px;top:357px;width:16px;height:16px"><div class="tri" style="left:3px;top:5px;border-top:4px solid #000;border-bottom-width:0"></div></div>
<div class="btn" style="left:439px;top:64px;width:16px;height:123px"></div>
<div class="a" style="left:183px;top:373px;width:256px;height:16px;background:#eae8e4"></div>
<div class="btn" style="left:183px;top:373px;width:16px;height:16px"><div class="tri" style="left:4px;top:3px;border-right:4px solid #000;border-left-width:0"></div></div>
<div class="btn" style="left:423px;top:373px;width:16px;height:16px"><div class="tri" style="left:6px;top:3px;border-left:4px solid #000;border-right-width:0"></div></div>
<div class="btn" style="left:199px;top:373px;width:55px;height:16px"></div>
<div class="a" style="left:439px;top:373px;width:16px;height:16px;background:#d4d0c8"></div>
<div class="a" style="left:181px;top:391px;width:274px;height:343px;background:#000"></div>
<div class="a" style="left:181px;top:391px;width:257px;height:193px;border:1px solid #7c7c7c"></div>
<div class="a" style="left:189px;top:400px;width:64px;height:64px;border:3px solid #7e7e7e;background:#c00"></div>
<svg class="a" style="left:192px;top:403px" width="58" height="58" viewBox="0 0 58 58"><defs><linearGradient id="gPor" x1="0" y1=".75" x2="1" y2=".25"><stop offset="0" stop-color="#5e0000"/><stop offset=".35" stop-color="#a00000"/><stop offset=".5" stop-color="#c40000"/><stop offset=".51" stop-color="#e20000"/><stop offset="1" stop-color="#f40000"/></linearGradient></defs><rect width="58" height="58" fill="url(#gPor)"/><path d="M0 14 14 0H30L0 30Z" fill="#c80000" opacity=".35"/><path d="M58 28 44 18 58 44Z" fill="#b00000" opacity=".5"/><path d="M0 58V50L8 46 16 38 28 48H38L42 50 58 54V58Z" fill="#050505"/><path d="M9 46C6 36 8 22 12 15 16 7 24 4 32 3.500 40 3 47 8 49 14 50 18 49 24 46 28L45 40C44 46 43 50 41 50L38 47 43 30 42 18 28 15 22 24 20 36 15 40Z" fill="#7c4226" stroke="#3e1e0e" stroke-width=".9"/><path d="M14 12Q24 4 36 6M18 18Q26 8 40 8M22 20Q30 12 46 14M11 30Q11 20 16 14M12 40Q10 32 13 24M45 26Q48 20 46 12M40 12l3 6M34 8l4 7" fill="none" stroke="#54280f" stroke-width="1.200"/><path d="M12 22Q18 10 28 8" fill="none" stroke="#b87860" stroke-width="1"/><path d="M28 14 44 16.500 44.500 22 43.500 40 38 47.500H28.500L18 38 16.500 31 13.500 27 15 23.500 19.500 25 22 23Z" fill="#eab68e" stroke="#7a3e1e" stroke-width=".7"/><path d="M22 23 31.500 23.300M36 23.300 44 23" stroke="#5a2c14" stroke-width="1.700"/><path d="M24 25.500H31.500V27.800H25ZM37.500 25.500H43.500V27.800H38Z" fill="#fff"/><rect x="27" y="25.400" width="2.600" height="2.600" fill="#a8500c"/><rect x="39.500" y="25.400" width="2.600" height="2.600" fill="#a8500c"/><rect x="28" y="26" width="1" height="1.400" fill="#000"/><rect x="40.500" y="26" width="1" height="1.400" fill="#000"/><path d="M23.500 25.300H32M37 25.300H44" stroke="#3a1a0a" stroke-width=".9"/><path d="M35.500 26V33.500Q35 35.500 33 35.500 31 35.500 30.500 34" fill="none" stroke="#7a4424" stroke-width="1"/><path d="M29 39.600H35.500" stroke="#7a4424" stroke-width="1"/></svg>
<div class="a" style="left:253px;top:400px;width:176px;height:64px;border:3px solid #7e7e7e;border-left-color:#9a9a9a;background:#000"></div>
<div class="a" style="left:221px;top:468px;width:32px;height:32px;background:#0b0d0d;border:1px solid #1d2222;border-radius:6px"></div>
<div class="a" style="left:269px;top:468px;width:32px;height:32px;background:#0b0d0d;border:1px solid #1d2222;border-radius:6px"></div>
<div class="a" style="left:317px;top:468px;width:32px;height:32px;background:#0b0d0d;border:1px solid #1d2222;border-radius:6px"></div>
<div class="a" style="left:365px;top:468px;width:32px;height:32px;background:#0b0d0d;border:1px solid #1d2222;border-radius:6px"></div>
<div class="a" style="left:221px;top:508px;width:32px;height:32px;background:#0b0d0d;border:1px solid #1d2222;border-radius:6px"></div>
<div class="a" style="left:269px;top:508px;width:32px;height:32px;background:#0b0d0d;border:1px solid #1d2222;border-radius:6px"></div>
<div class="a" style="left:317px;top:508px;width:32px;height:32px;background:#0b0d0d;border:1px solid #1d2222;border-radius:6px"></div>
<div class="a" style="left:365px;top:508px;width:32px;height:32px;background:#0b0d0d;border:1px solid #1d2222;border-radius:6px"></div>
<svg class="a" style="left:227px;top:471px" width="25" height="17" viewBox="0 0 25 17"><path d="M.500 3Q.500 1.200 2.400 1.200H20.200L21.300 .600 23 1.700 24.100 3.900 23.800 6.700 22.400 7.800 23.800 13.300 22.400 15.600H16.900L15.800 12.200 13 10.600 10.200 10 2.400 9.400 .500 7.200Z" fill="#000" stroke="#fff" stroke-width="1" stroke-linejoin="round"/><path d="M11.500 8.500h2.500" stroke="#fff"/></svg>
<svg class="a" style="left:269px;top:473px" width="32" height="15" viewBox="0 0 32 15"><path d="M0.8 4.1 8.9 4.1 10.6 2.8 10 1.1 13.3 0.8 16.1 1.7 19.4 1.1 20 3.7 28.9 4.8 30.8 5.6 30.6 13.3 28.3 13.3 24.4 10.6 20 11.7 17.8 10 14.4 11.1 8.9 8.3 4.4 6.7 0.8 6.1Z" fill="#000" stroke="#fff" stroke-width="1" stroke-linejoin="round"/><circle cx="15" cy="9" r=".9" fill="none" stroke="#fff" stroke-width=".8"/></svg>
<svg class="a" style="left:318px;top:475px" width="31" height="13" viewBox="0 0 31 13"><path d="M0.3 1.3 16.1 0.9 18.9 2.8 30.3 3.1 30.3 11.7 26.1 10.6 22.8 8.3 18.9 10 15 8.3 11.7 9.4 9.4 7.6 0.3 7.6Z" fill="#000" stroke="#fff" stroke-width="1" stroke-linejoin="round"/><path d="M.300 4.200H13.900" stroke="#fff"/></svg>
<svg class="a" style="left:365px;top:473px" width="33" height="15" viewBox="0 0 33 15"><path d="M0.6 3.3 2.2 1.7 11.1 1.1 14.4 2.2 18.9 0.8 22.8 2.8 28.9 3 32 4.4 31.1 11.1 27.8 10.6 24.4 8.9 21.1 11.1 17.8 8.3 14.4 7.2 11.1 12.2 7.8 13.3 6.1 11.1 9.4 7.2 6.7 5.6 1.7 5.6Z" fill="#000" stroke="#fff" stroke-width="1" stroke-linejoin="round"/><path d="M8 12l3-4" stroke="#fff" stroke-width=".7"/></svg>
<svg class="a" style="left:319px;top:510px" width="28" height="18" viewBox="0 0 28 18"><rect x="1" y="1" width="26" height="16" rx="2.500" fill="#000" stroke="#fff" stroke-width="1"/><rect x="2.800" y="2.800" width="22.400" height="12.400" rx="1.500" fill="none" stroke="#fff" stroke-width=".9"/><circle cx="14" cy="9" r="4.800" fill="none" stroke="#fff" stroke-width=".9"/><circle cx="14" cy="9" r="3" fill="#fff"/><path d="M14 7.200V10.800M12.200 9H15.800" stroke="#000" stroke-width="1"/><path d="M7 4.500Q4.500 9 7 13.500M21 4.500Q23.500 9 21 13.500M9 5Q7.300 9 9 13M19 5Q20.700 9 19 13" fill="none" stroke="#fff" stroke-width=".8"/></svg>
<svg class="a" style="left:366px;top:509px" width="30" height="19" viewBox="0 0 30 19"><path d="M1.500 11.500 17 1.500 27 5 27 7.500 8.500 17 1.500 14Z" fill="#000" stroke="#fff" stroke-width="1" stroke-linejoin="round"/><path d="M1.500 11.500 8.500 14.500 27 5M8.500 14.500V17" fill="none" stroke="#fff" stroke-width=".9"/><path d="M9 9.500 14 6.500 19 8 14 11Z" fill="#fff"/><circle cx="7" cy="11.700" r=".7" fill="#fff"/><circle cx="20.500" cy="4.500" r=".7" fill="#fff"/><ellipse cx="25.500" cy="11.500" rx="2" ry="1.300" fill="none" stroke="#fff" stroke-width=".9"/><ellipse cx="19.500" cy="15" rx="2" ry="1.300" fill="none" stroke="#fff" stroke-width=".9"/></svg>
<div class="a" style="left:221px;top:548px;width:32px;height:32px;background:#c6c3c6;border:2px solid #7c7c7c;box-shadow:inset 0 0 0 1px #686868"></div><div class="a" style="left:221px;top:548px;width:32px;height:32px;border:1px solid #909090"></div>
<div class="a" style="left:277px;top:548px;width:64px;height:32px;background:#c6c3c6;border:2px solid #7c7c7c;box-shadow:inset 0 0 0 1px #686868"></div><div class="a" style="left:277px;top:548px;width:64px;height:32px;border:1px solid #909090"></div>
<div class="a" style="left:365px;top:548px;width:32px;height:32px;background:#c6c3c6;border:2px solid #7c7c7c;box-shadow:inset 0 0 0 1px #686868"></div><div class="a" style="left:365px;top:548px;width:32px;height:32px;border:1px solid #909090"></div>
<svg class="a" style="left:228px;top:555px" width="18" height="18" viewBox="0 0 18 18"><path d="M6.500 1.500H11.500V6.500H16.500V11.500H11.500V16.500H6.500V11.500H1.500V6.500H6.500Z" fill="#000" stroke="#fff" stroke-width="1"/></svg>
<svg class="a" style="left:296px;top:556px" width="26" height="17" viewBox="0 0 25 17"><path d="M.500 3Q.500 1.200 2.400 1.200H20.200L21.300 .600 23 1.700 24.100 3.900 23.800 6.700 22.400 7.800 23.800 13.300 22.400 15.600H16.900L15.800 12.200 13 10.600 10.200 10 2.400 9.400 .500 7.200Z" fill="#000" stroke="#fff" stroke-width="1"/><path d="M12 8.700h2" stroke="#fff" stroke-width=".8"/></svg>
<svg class="a" style="left:374px;top:553px" width="14" height="24" viewBox="0 0 14 24"><path d="M2.500 8Q2.500 2.500 7 1.500 11.500 2.500 11.500 8V20Q11.500 22.500 9 22.500H5Q2.500 22.500 2.500 20Z" fill="#000" stroke="#fff" stroke-width="1"/><path d="M4.500 9.500Q4.500 8.500 5.500 8.500H8M4.500 10.500V19.500M5 20.500H9M9.500 19.500V18" fill="none" stroke="#fff" stroke-width=".8"/></svg>
</div>
</body></html>
